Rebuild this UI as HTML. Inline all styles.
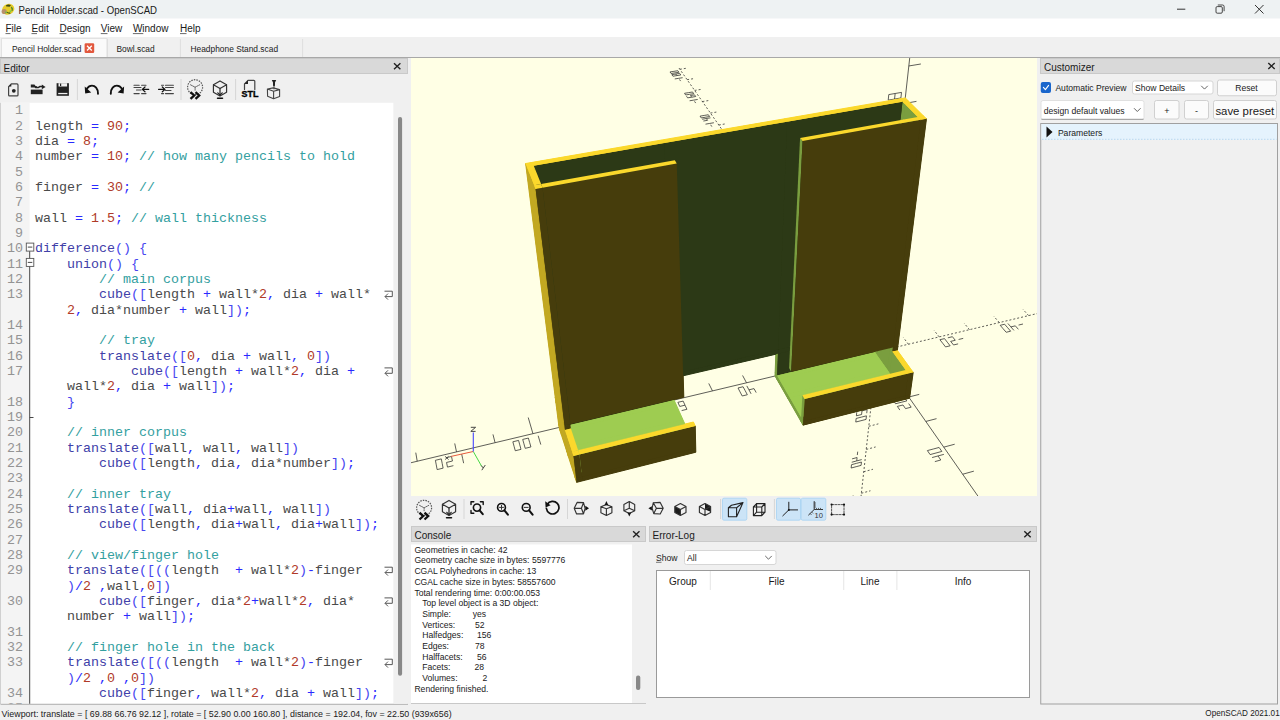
<!DOCTYPE html>
<html><head><meta charset="utf-8"><title>OpenSCAD</title>
<style>html,body{margin:0;padding:0;width:1280px;height:720px;overflow:hidden;background:#f0f0f0}
svg text{font-family:"Liberation Sans", sans-serif;} .mono{font-family:"Liberation Mono", monospace;}</style></head>
<body><svg width="1280" height="720" viewBox="0 0 1280 720" style="display:block">
<rect x="0" y="0" width="1280" height="720" fill="#f0f0f0"/>
<rect x="0" y="0" width="1280" height="18.5" fill="#eef2f3"/>
<text x="18.5" y="14.00" font-size="11" fill="#1a1a1a" textLength="138.5" lengthAdjust="spacingAndGlyphs">Pencil Holder.scad - OpenSCAD</text>
<rect x="0" y="18.5" width="1280" height="18.5" fill="#ffffff"/>
<text x="5.5" y="32.40" font-size="10" fill="#1a1a1a">File</text>
<text x="31.5" y="32.40" font-size="10" fill="#1a1a1a">Edit</text>
<text x="59.5" y="32.40" font-size="10" fill="#1a1a1a">Design</text>
<text x="100.8" y="32.40" font-size="10" fill="#1a1a1a">View</text>
<text x="132.9" y="32.40" font-size="10" fill="#1a1a1a">Window</text>
<text x="180" y="32.40" font-size="10" fill="#1a1a1a">Help</text>
<rect x="0" y="37" width="1280" height="20.5" fill="#f0f0f0"/>
<rect x="1.5" y="38.5" width="105.5" height="19.5" fill="#fafafa" stroke="#e2e2e2" stroke-width="1"/>
<line x1="107.4" y1="39" x2="107.4" y2="57" stroke="#dedede" stroke-width="1"/>
<line x1="180.4" y1="39" x2="180.4" y2="57" stroke="#dedede" stroke-width="1"/>
<line x1="302.6" y1="39" x2="302.6" y2="57" stroke="#dedede" stroke-width="1"/>
<line x1="107.4" y1="57.5" x2="1280" y2="57.5" stroke="#a8a8a8" stroke-width="1"/>
<text x="12" y="51.90" font-size="8.4" fill="#1a1a1a">Pencil Holder.scad</text>
<text x="116.5" y="51.90" font-size="8.4" fill="#1a1a1a">Bowl.scad</text>
<text x="190.5" y="51.90" font-size="8.4" fill="#1a1a1a">Headphone Stand.scad</text>
<line x1="0" y1="57.5" x2="1280" y2="57.5" stroke="#a8a8a8" stroke-width="1"/>
<rect x="0.5" y="58.5" width="407" height="15" fill="#d9d9d9" stroke="#c9c9c9" stroke-width="1"/>
<text x="3.5" y="71.80" font-size="10" fill="#1a1a1a">Editor</text>
<rect x="0" y="102.8" width="393.6" height="601" fill="#ffffff"/>
<rect x="0" y="102.8" width="29.6" height="601" fill="#f4f4f4"/>
<line x1="0.5" y1="102.8" x2="0.5" y2="704" stroke="#d0d0d0" stroke-width="1"/>
<line x1="0.5" y1="704.3" x2="408" y2="704.3" stroke="#b0b0b0" stroke-width="1"/>
<rect x="393.6" y="102.8" width="14" height="601" fill="#f0f0f0"/>
<rect x="398" y="117" width="4.1" height="558.7" fill="#888888" rx="2"/>
<rect x="411" y="58" width="626" height="438" fill="#ffffe5"/>
<svg x="411" y="58" width="626" height="438" viewBox="411 58 626 438" overflow="hidden">
<g stroke="#2a2a2a" stroke-width="0.75" fill="none"><line x1="877.09" y1="351.69" x2="156.17" y2="523.43"/>
<line x1="877.09" y1="351.69" x2="1399.90" y2="227.14" stroke-dasharray="2,2"/>
<line x1="877.09" y1="351.69" x2="1410.81" y2="1115.87"/>
<line x1="877.09" y1="351.69" x2="678.40" y2="67.20" stroke-dasharray="2,2"/>
<line x1="877.09" y1="351.69" x2="965.60" y2="-445.23"/>
<line x1="877.09" y1="351.69" x2="836.05" y2="721.29" stroke-dasharray="2,2"/>
<line x1="845.27" y1="359.27" x2="840.68" y2="352.30"/>
<line x1="892.54" y1="373.81" x2="902.82" y2="371.29"/>
<line x1="880.07" y1="324.88" x2="890.33" y2="322.51"/>
<line x1="908.39" y1="344.23" x2="903.41" y2="337.49" stroke-dasharray="2,2"/>
<line x1="862.36" y1="330.60" x2="872.24" y2="328.31" stroke-dasharray="2,2"/>
<line x1="874.23" y1="377.49" x2="884.12" y2="375.07" stroke-dasharray="2,2"/>
<line x1="812.91" y1="366.98" x2="808.53" y2="359.89"/>
<line x1="908.76" y1="397.03" x2="919.25" y2="394.39"/>
<line x1="883.17" y1="297.01" x2="893.62" y2="294.67"/>
<line x1="939.18" y1="336.90" x2="934.01" y2="330.26" stroke-dasharray="2,2"/>
<line x1="848.31" y1="310.47" x2="858.00" y2="308.29" stroke-dasharray="2,2"/>
<line x1="871.47" y1="402.35" x2="881.19" y2="399.91" stroke-dasharray="2,2"/>
<path d="M823.10,376.45L818.16,377.64M818.16,377.64L815.78,373.78M820.70,372.60L815.78,373.78M818.32,368.77L820.70,372.60M818.32,368.77L813.42,369.94M814.53,378.52L809.57,379.72M809.57,379.72L807.22,375.83M807.22,375.83L804.89,371.98M809.82,370.80L804.89,371.98M809.82,370.80L812.17,374.65M812.17,374.65L814.53,378.52"/>
<path d="M899.84,410.07L897.36,406.41M897.36,406.41L903.01,404.98M905.51,408.62L903.01,404.98M911.16,407.18L905.51,408.62M911.16,407.18L908.64,403.54M895.55,403.75L893.09,400.14M893.09,400.14L898.71,398.72M898.71,398.72L904.32,397.31M906.80,400.90L904.32,397.31M906.80,400.90L901.18,402.32M901.18,402.32L895.55,403.75"/>
<path d="M868.96,291.24L868.52,295.55M868.52,295.55L874.15,294.29M874.60,289.98L874.15,294.29M880.22,288.74L874.60,289.98M880.22,288.74L879.76,293.04M868.21,298.69L867.78,302.96M867.78,302.96L873.37,301.70M873.37,301.70L878.95,300.45M879.42,296.19L878.95,300.45M879.42,296.19L873.82,297.44M873.82,297.44L868.21,298.69"/>
<path d="M963.19,338.38L958.62,339.47M958.12,343.87L953.52,344.98M953.52,344.98L950.68,341.38M955.27,340.28L950.68,341.38M952.43,336.71L955.27,340.28M952.43,336.71L947.87,337.81M950.14,345.80L945.53,346.91M945.53,346.91L942.71,343.29M942.71,343.29L939.92,339.70M944.51,338.61L939.92,339.70M944.51,338.61L947.31,342.19M947.31,342.19L950.14,345.80"/>
<path d="M839.89,313.06L837.86,310.10M831.21,309.10L829.22,306.17M829.22,306.17L834.37,305.02M836.38,307.94L834.37,305.02M841.53,306.79L836.38,307.94M841.53,306.79L839.51,303.87M827.77,304.03L825.80,301.14M825.80,301.14L830.92,300.00M830.92,300.00L836.04,298.86M838.04,301.74L836.04,298.86M838.04,301.74L832.91,302.89M832.91,302.89L827.77,304.03"/>
<path d="M862.62,404.57L862.24,408.22M856.77,412.20L856.41,415.82M856.41,415.82L861.58,414.51M861.96,410.89L861.58,414.51M867.13,409.58L861.96,410.89M867.13,409.58L866.73,413.20M856.14,418.46L855.78,422.04M855.78,422.04L860.93,420.73M860.93,420.73L866.06,419.42M866.45,415.84L866.06,419.42M866.45,415.84L861.30,417.15M861.30,417.15L856.14,418.46"/>
<line x1="780.00" y1="374.82" x2="775.84" y2="367.61"/>
<line x1="925.81" y1="421.45" x2="936.52" y2="418.66"/>
<line x1="886.39" y1="268.01" x2="897.04" y2="265.70"/>
<line x1="969.48" y1="329.68" x2="964.12" y2="323.15" stroke-dasharray="2,2"/>
<line x1="834.87" y1="291.24" x2="844.38" y2="289.15" stroke-dasharray="2,2"/>
<line x1="868.81" y1="426.31" x2="878.36" y2="423.85" stroke-dasharray="2,2"/>
<line x1="746.52" y1="382.80" x2="742.59" y2="375.46"/>
<line x1="943.76" y1="447.15" x2="954.70" y2="444.22"/>
<line x1="889.74" y1="237.82" x2="900.61" y2="235.55"/>
<line x1="999.28" y1="322.58" x2="993.75" y2="316.16" stroke-dasharray="2,2"/>
<line x1="822.02" y1="272.84" x2="831.36" y2="270.84" stroke-dasharray="2,2"/>
<line x1="866.24" y1="449.42" x2="875.63" y2="446.95" stroke-dasharray="2,2"/>
<path d="M754.04,388.61L756.20,392.60M754.04,388.61L748.95,389.83M751.09,393.83L748.95,389.83M748.95,389.83L746.82,385.86M747.33,394.74L742.19,395.98M742.19,395.98L740.09,391.96M740.09,391.96L738.00,387.97M743.09,386.75L738.00,387.97M743.09,386.75L745.20,390.73M745.20,390.73L747.33,394.74"/>
<path d="M940.79,460.00L934.87,461.60M940.79,460.00L938.01,455.95M932.11,457.55L938.01,455.95M938.01,455.95L943.89,454.37M930.11,454.59L927.39,450.59M927.39,450.59L933.25,449.02M933.25,449.02L939.10,447.46M941.85,451.43L939.10,447.46M941.85,451.43L935.99,453.01M935.99,453.01L930.11,454.59"/>
<path d="M880.88,229.95L875.01,231.16M880.88,229.95L880.39,234.62M874.54,235.84L880.39,234.62M880.39,234.62L886.22,233.41M874.20,239.25L873.73,243.88M873.73,243.88L879.55,242.66M879.55,242.66L885.35,241.44M885.85,236.82L885.35,241.44M885.85,236.82L880.03,238.03M880.03,238.03L874.20,239.25"/>
<path d="M1022.99,324.01L1018.58,325.07M1015.33,325.85L1018.38,329.33M1015.33,325.85L1010.89,326.92M1013.92,330.40L1010.89,326.92M1010.89,326.92L1007.88,323.46M1010.65,331.19L1006.18,332.27M1006.18,332.27L1003.17,328.77M1003.17,328.77L1000.19,325.30M1004.63,324.24L1000.19,325.30M1004.63,324.24L1007.63,327.70M1007.63,327.70L1010.65,331.19"/>
<path d="M813.90,275.20L812.04,272.50M810.69,270.53L805.71,271.59M810.69,270.53L808.85,267.85M803.89,268.90L808.85,267.85M808.85,267.85L813.80,266.80M802.56,266.95L800.75,264.29M800.75,264.29L805.69,263.25M805.69,263.25L810.62,262.21M812.45,264.85L810.62,262.21M812.45,264.85L807.51,265.90M807.51,265.90L802.56,266.95"/>
<path d="M857.69,451.67L857.34,455.06M857.08,457.54L852.07,458.87M857.08,457.54L856.73,460.91M851.73,462.24L856.73,460.91M856.73,460.91L861.71,459.59M851.49,464.69L851.15,468.03M851.15,468.03L856.12,466.70M856.12,466.70L861.08,465.38M861.44,462.05L861.08,465.38M861.44,462.05L856.47,463.37M856.47,463.37L851.49,464.69"/>
<line x1="712.46" y1="390.91" x2="708.77" y2="383.45"/>
<line x1="962.68" y1="474.24" x2="973.86" y2="471.15"/>
<line x1="893.23" y1="206.35" x2="904.32" y2="204.12"/>
<line x1="1028.61" y1="315.59" x2="1022.91" y2="309.27" stroke-dasharray="2,2"/>
<line x1="809.72" y1="255.23" x2="818.88" y2="253.31" stroke-dasharray="2,2"/>
<line x1="863.76" y1="471.72" x2="872.99" y2="469.24" stroke-dasharray="2,2"/>
<line x1="677.81" y1="399.16" x2="674.36" y2="391.57"/>
<line x1="982.66" y1="502.83" x2="994.08" y2="499.57"/>
<line x1="896.88" y1="173.52" x2="908.19" y2="171.35"/>
<line x1="1057.48" y1="308.72" x2="1051.61" y2="302.49" stroke-dasharray="2,2"/>
<line x1="797.93" y1="238.35" x2="806.93" y2="236.51" stroke-dasharray="2,2"/>
<line x1="861.37" y1="493.26" x2="870.45" y2="490.77" stroke-dasharray="2,2"/>
<path d="M686.93,409.31L681.64,410.59M685.03,405.18L686.93,409.31M685.03,405.18L679.76,406.45M683.15,401.08L685.03,405.18M683.15,401.08L677.89,402.34M679.76,406.45L677.89,402.34M677.75,411.53L672.43,412.81M672.43,412.81L670.58,408.65M670.58,408.65L668.76,404.52M674.03,403.26L668.76,404.52M674.03,403.26L675.88,407.38M675.88,407.38L677.75,411.53"/>
<path d="M973.85,518.95L970.78,514.43M980.04,517.16L973.85,518.95M980.04,517.16L976.94,512.65M986.20,515.38L980.04,517.16M986.20,515.38L983.08,510.88M976.94,512.65L983.08,510.88M968.54,511.13L965.51,506.67M965.51,506.67L971.64,504.92M971.64,504.92L977.74,503.18M980.81,507.61L977.74,503.18M980.81,507.61L974.69,509.37M974.69,509.37L968.54,511.13"/>
<path d="M881.59,165.84L881.08,170.94M887.70,164.68L881.59,165.84M887.70,164.68L887.17,169.78M893.79,163.53L887.70,164.68M893.79,163.53L893.24,168.62M887.17,169.78L893.24,168.62M880.70,174.65L880.20,179.69M880.20,179.69L886.25,178.52M886.25,178.52L892.29,177.36M892.84,172.33L892.29,177.36M892.84,172.33L886.78,173.49M886.78,173.49L880.70,174.65"/>
<path d="M1080.91,310.10L1076.63,311.13M1076.71,315.25L1072.40,316.29M1073.49,311.89L1076.71,315.25M1073.49,311.89L1069.19,312.92M1070.29,308.54L1073.49,311.89M1070.29,308.54L1066.00,309.57M1069.19,312.92L1066.00,309.57M1069.23,317.06L1064.90,318.10M1064.90,318.10L1061.71,314.71M1061.71,314.71L1058.55,311.35M1062.85,310.32L1058.55,311.35M1062.85,310.32L1066.03,313.68M1066.03,313.68L1069.23,317.06"/>
<path d="M790.08,240.52L788.37,238.03M782.33,237.19L780.66,234.73M787.13,236.22L782.33,237.19M787.13,236.22L785.44,233.76M791.92,235.25L787.13,236.22M791.92,235.25L790.22,232.79M785.44,233.76L790.22,232.79M779.43,232.93L777.78,230.49M777.78,230.49L782.54,229.54M782.54,229.54L787.29,228.58M788.98,231.01L787.29,228.58M788.98,231.01L784.21,231.97M784.21,231.97L779.43,232.93"/>
<path d="M853.11,495.53L852.77,498.70M847.69,502.35L847.38,505.49M852.53,501.01L847.69,502.35M852.53,501.01L852.20,504.15M857.36,499.68L852.53,501.01M857.36,499.68L857.02,502.82M852.20,504.15L857.02,502.82M847.15,507.78L846.83,510.89M846.83,510.89L851.64,509.56M851.64,509.56L856.44,508.23M856.77,505.11L856.44,508.23M856.77,505.11L851.96,506.45M851.96,506.45L847.15,507.78"/>
<line x1="642.55" y1="407.56" x2="639.35" y2="399.84"/>
<line x1="1003.77" y1="533.06" x2="1015.45" y2="529.61"/>
<line x1="900.69" y1="139.25" x2="912.24" y2="137.13"/>
<line x1="1085.89" y1="301.95" x2="1079.87" y2="295.82" stroke-dasharray="2,2"/>
<line x1="786.62" y1="222.15" x2="795.47" y2="220.39" stroke-dasharray="2,2"/>
<line x1="859.06" y1="514.08" x2="867.99" y2="511.58" stroke-dasharray="2,2"/>
<line x1="606.66" y1="416.11" x2="603.73" y2="408.25"/>
<line x1="1026.13" y1="565.08" x2="1038.08" y2="561.41"/>
<line x1="904.66" y1="103.44" x2="916.46" y2="101.38"/>
<line x1="1113.86" y1="295.28" x2="1107.69" y2="289.25" stroke-dasharray="2,2"/>
<line x1="775.77" y1="206.61" x2="784.46" y2="204.92" stroke-dasharray="2,2"/>
<line x1="856.82" y1="534.21" x2="865.61" y2="531.70" stroke-dasharray="2,2"/>
<path d="M615.18,426.63L609.69,427.95M609.69,427.95L608.09,423.66M608.09,423.66L606.51,419.40M611.95,418.10L606.51,419.40M611.95,418.10L613.56,422.34M613.56,422.34L615.18,426.63M613.56,422.34L608.09,423.66M605.66,428.92L600.15,430.25M600.15,430.25L598.59,425.94M598.59,425.94L597.04,421.66M602.51,420.36L597.04,421.66M602.51,420.36L604.08,424.62M604.08,424.62L605.66,428.92"/>
<path d="M1017.50,583.16L1014.05,578.08M1014.05,578.08L1020.50,576.09M1020.50,576.09L1026.93,574.10M1030.43,579.15L1026.93,574.10M1030.43,579.15L1023.98,581.15M1023.98,581.15L1017.50,583.16M1023.98,581.15L1020.50,576.09M1011.53,574.38L1008.13,569.38M1008.13,569.38L1014.55,567.42M1014.55,567.42L1020.94,565.46M1024.38,570.43L1020.94,565.46M1024.38,570.43L1017.97,572.41M1017.97,572.41L1011.53,574.38"/>
<path d="M888.77,94.58L888.21,100.15M888.21,100.15L894.56,99.05M894.56,99.05L900.90,97.96M901.50,92.40L900.90,97.96M901.50,92.40L895.15,93.49M895.15,93.49L888.77,94.58M895.15,93.49L894.56,99.05M887.80,104.21L887.25,109.71M887.25,109.71L893.57,108.61M893.57,108.61L899.86,107.50M900.46,102.01L899.86,107.50M900.46,102.01L894.14,103.11M894.14,103.11L887.80,104.21"/>
<path d="M1137.02,296.63L1132.87,297.62M1133.21,301.62L1129.04,302.63M1129.04,302.63L1125.66,299.36M1125.66,299.36L1122.31,296.11M1126.46,295.12L1122.31,296.11M1126.46,295.12L1129.83,298.36M1129.83,298.36L1133.21,301.62M1129.83,298.36L1125.66,299.36M1125.97,303.37L1121.78,304.38M1121.78,304.38L1118.42,301.09M1118.42,301.09L1115.09,297.83M1119.26,296.84L1115.09,297.83M1119.26,296.84L1122.60,300.09M1122.60,300.09L1125.97,303.37"/>
<path d="M768.17,208.61L766.60,206.32M760.82,205.55L759.28,203.28M759.28,203.28L763.90,202.39M763.90,202.39L768.51,201.49M770.08,203.76L768.51,201.49M770.08,203.76L765.45,204.65M765.45,204.65L760.82,205.55M765.45,204.65L763.90,202.39M758.15,201.62L756.62,199.37M756.62,199.37L761.22,198.49M761.22,198.49L765.81,197.61M767.36,199.85L765.81,197.61M767.36,199.85L762.76,200.73M762.76,200.73L758.15,201.62"/>
<path d="M848.82,536.48L848.51,539.45M843.60,542.95L843.31,545.89M843.31,545.89L847.98,544.55M847.98,544.55L852.64,543.21M852.96,540.27L852.64,543.21M852.96,540.27L848.29,541.61M848.29,541.61L843.60,542.95M848.29,541.61L847.98,544.55M843.09,548.03L842.80,550.94M842.80,550.94L847.45,549.60M847.45,549.60L852.10,548.26M852.41,545.35L852.10,548.26M852.41,545.35L847.76,546.69M847.76,546.69L843.09,548.03"/>
<line x1="570.13" y1="424.82" x2="567.47" y2="416.81"/>
<line x1="1049.84" y1="599.03" x2="1062.07" y2="595.14"/>
<line x1="908.82" y1="65.97" x2="920.88" y2="63.99"/>
<line x1="1141.40" y1="288.72" x2="1135.08" y2="282.78" stroke-dasharray="2,2"/>
<line x1="765.34" y1="191.68" x2="773.88" y2="190.05" stroke-dasharray="2,2"/>
<line x1="854.66" y1="553.68" x2="863.31" y2="551.17" stroke-dasharray="2,2"/>
<line x1="532.94" y1="433.68" x2="528.22" y2="417.51"/>
<line x1="1075.03" y1="635.10" x2="1100.00" y2="626.87"/>
<line x1="913.18" y1="26.74" x2="937.75" y2="22.95"/>
<line x1="1168.52" y1="282.26" x2="1155.69" y2="270.64" stroke-dasharray="2,2"/>
<line x1="755.31" y1="177.32" x2="772.08" y2="174.19" stroke-dasharray="2,2"/>
<line x1="852.57" y1="572.53" x2="869.57" y2="567.52" stroke-dasharray="2,2"/>
<path d="M538.17,435.73L539.48,440.14M539.48,440.14L540.80,444.58M530.93,446.96L525.21,448.34M525.21,448.34L523.96,443.86M523.96,443.86L522.71,439.43M528.38,438.07L522.71,439.43M528.38,438.07L529.65,442.50M529.65,442.50L530.93,446.96M521.01,449.35L515.27,450.74M515.27,450.74L514.05,446.24M514.05,446.24L512.85,441.79M518.55,440.42L512.85,441.79M518.55,440.42L519.77,444.87M519.77,444.87L521.01,449.35"/>
<path d="M1087.21,661.02L1080.40,663.32M1080.40,663.32L1073.56,665.63M1066.70,655.54L1062.80,649.80M1062.80,649.80L1069.56,647.54M1069.56,647.54L1076.31,645.30M1080.26,651.00L1076.31,645.30M1080.26,651.00L1073.50,653.27M1073.50,653.27L1066.70,655.54M1059.95,645.62L1056.11,639.96M1056.11,639.96L1062.84,637.75M1062.84,637.75L1069.54,635.54M1073.43,641.15L1069.54,635.54M1073.43,641.15L1066.71,643.38M1066.71,643.38L1059.95,645.62"/>
<path d="M911.10,3.83L904.42,4.82M904.42,4.82L897.71,5.81M896.63,16.51L896.02,22.62M896.02,22.62L902.66,21.61M902.66,21.61L909.28,20.60M909.94,14.50L909.28,20.60M909.94,14.50L903.30,15.51M903.30,15.51L896.63,16.51M895.57,27.08L894.96,33.12M894.96,33.12L901.57,32.09M901.57,32.09L908.15,31.07M908.80,25.05L908.15,31.07M908.80,25.05L902.20,26.06M902.20,26.06L895.57,27.08"/>
<path d="M1198.36,281.90L1194.35,282.86M1187.87,280.44L1191.41,283.56M1191.41,283.56L1194.97,286.72M1187.98,288.40L1183.93,289.38M1183.93,289.38L1180.40,286.21M1180.40,286.21L1176.89,283.06M1180.92,282.10L1176.89,283.06M1180.92,282.10L1184.43,285.24M1184.43,285.24L1187.98,288.40M1180.95,290.10L1176.89,291.08M1176.89,291.08L1173.38,287.90M1173.38,287.90L1169.89,284.74M1173.93,283.77L1169.89,284.74M1173.93,283.77L1177.43,286.92M1177.43,286.92L1180.95,290.10"/>
<path d="M747.96,179.17L746.50,177.05M749.91,174.68L745.44,175.51M745.44,175.51L740.97,176.34M738.50,172.70L737.08,170.62M737.08,170.62L741.53,169.81M741.53,169.81L745.96,168.99M747.40,171.06L745.96,168.99M747.40,171.06L742.95,171.88M742.95,171.88L738.50,172.70M736.05,169.11L734.65,167.05M734.65,167.05L739.08,166.24M739.08,166.24L743.49,165.43M744.92,167.48L743.49,165.43M744.92,167.48L740.49,168.29M740.49,168.29L736.05,169.11"/>
<path d="M844.82,574.81L844.53,577.58M848.84,578.27L844.31,579.61M844.31,579.61L839.77,580.95M839.29,585.71L839.02,588.44M839.02,588.44L843.53,587.10M843.53,587.10L848.03,585.76M848.33,583.03L848.03,585.76M848.33,583.03L843.82,584.37M843.82,584.37L839.29,585.71M838.82,590.44L838.55,593.14M838.55,593.14L843.04,591.80M843.04,591.80L847.52,590.46M847.82,587.76L847.52,590.46M847.82,587.76L843.32,589.09M843.32,589.09L838.82,590.44"/>
<line x1="495.07" y1="442.70" x2="492.98" y2="434.40"/>
<line x1="1101.86" y1="673.50" x2="1114.69" y2="669.10"/>
<line x1="917.75" y1="-14.38" x2="930.35" y2="-16.19"/>
<line x1="1195.23" y1="275.90" x2="1188.63" y2="270.14" stroke-dasharray="2,2"/>
<line x1="745.66" y1="163.50" x2="753.92" y2="161.99" stroke-dasharray="2,2"/>
<line x1="850.54" y1="590.78" x2="858.93" y2="588.27" stroke-dasharray="2,2"/>
<line x1="456.50" y1="451.89" x2="454.72" y2="443.44"/>
<line x1="1130.47" y1="714.47" x2="1143.62" y2="709.77"/>
<line x1="922.54" y1="-57.54" x2="935.44" y2="-59.24"/>
<line x1="1221.53" y1="269.63" x2="1214.80" y2="263.96" stroke-dasharray="2,2"/>
<line x1="736.37" y1="150.20" x2="744.50" y2="148.74" stroke-dasharray="2,2"/>
<line x1="848.58" y1="608.47" x2="856.84" y2="605.96" stroke-dasharray="2,2"/>
<path d="M461.67,454.02L462.65,458.59M462.65,458.59L463.65,463.19M453.40,465.67L447.47,467.10M447.47,467.10L446.55,462.45M452.45,461.04L446.55,462.45M451.51,456.45L452.45,461.04M451.51,456.45L445.63,457.85M443.11,468.15L437.15,469.59M437.15,469.59L436.27,464.92M436.27,464.92L435.40,460.30M441.31,458.89L435.40,460.30M441.31,458.89L442.21,463.50M442.21,463.50L443.11,468.15"/>
<path d="M1144.76,744.00L1137.60,746.63M1137.60,746.63L1130.41,749.27M1122.58,737.76L1118.13,731.20M1118.13,731.20L1125.25,728.64M1129.73,735.16L1125.25,728.64M1136.84,732.58L1129.73,735.16M1136.84,732.58L1132.33,726.08M1114.89,726.44L1110.52,720.00M1110.52,720.00L1117.59,717.48M1117.59,717.48L1124.63,714.97M1129.06,721.36L1124.63,714.97M1129.06,721.36L1121.99,723.89M1121.99,723.89L1114.89,726.44"/>
<path d="M920.50,-82.94L913.50,-82.07M913.50,-82.07L906.48,-81.18M905.29,-69.38L904.61,-62.64M904.61,-62.64L911.57,-63.55M912.27,-70.28L911.57,-63.55M919.23,-71.17L912.27,-70.28M919.23,-71.17L918.50,-64.45M904.11,-57.73L903.44,-51.08M903.44,-51.08L910.36,-52.00M910.36,-52.00L917.25,-52.92M917.97,-59.55L917.25,-52.92M917.97,-59.55L911.05,-58.64M911.05,-58.64L904.11,-57.73"/>
<path d="M1250.89,269.28L1247.01,270.21M1240.48,267.86L1244.15,270.90M1244.15,270.90L1247.86,273.95M1241.07,275.59L1237.15,276.54M1237.15,276.54L1233.47,273.46M1237.39,272.52L1233.47,273.46M1233.73,269.48L1237.39,272.52M1233.73,269.48L1229.82,270.41M1234.26,277.23L1230.32,278.19M1230.32,278.19L1226.66,275.10M1226.66,275.10L1223.03,272.03M1226.96,271.10L1223.03,272.03M1226.96,271.10L1230.59,274.15M1230.59,274.15L1234.26,277.23"/>
<path d="M729.24,151.91L727.89,149.95M731.23,147.75L726.91,148.52M726.91,148.52L722.58,149.29M720.29,145.92L718.98,143.99M718.98,143.99L723.28,143.23M724.60,145.15L723.28,143.23M728.90,144.39L724.60,145.15M728.90,144.39L727.57,142.47M718.02,142.58L716.72,140.67M716.72,140.67L721.00,139.92M721.00,139.92L725.28,139.17M726.60,141.07L725.28,139.17M726.60,141.07L722.31,141.82M722.31,141.82L718.02,142.58"/>
<path d="M841.06,610.75L840.79,613.35M844.98,613.92L840.59,615.26M840.59,615.26L836.18,616.60M835.73,621.07L835.47,623.63M835.47,623.63L839.85,622.29M840.12,619.73L839.85,622.29M844.50,618.39L840.12,619.73M844.50,618.39L844.22,620.95M835.29,625.50L835.03,628.05M835.03,628.05L839.39,626.71M839.39,626.71L843.74,625.37M844.02,622.83L843.74,625.37M844.02,622.83L839.66,624.16M839.66,624.16L835.29,625.50"/>
<line x1="417.22" y1="461.25" x2="415.75" y2="452.64"/>
<line x1="1161.05" y1="758.26" x2="1174.54" y2="753.23"/>
<line x1="927.58" y1="-102.88" x2="940.78" y2="-104.47"/>
<line x1="1247.44" y1="263.46" x2="1240.58" y2="257.87" stroke-dasharray="2,2"/>
<line x1="727.41" y1="137.38" x2="735.41" y2="135.98" stroke-dasharray="2,2"/>
<line x1="846.67" y1="625.61" x2="854.81" y2="623.11" stroke-dasharray="2,2"/>
<line x1="377.20" y1="470.78" x2="376.06" y2="462.01"/>
<line x1="1193.82" y1="805.18" x2="1207.66" y2="799.79"/>
<line x1="932.87" y1="-150.59" x2="946.41" y2="-152.05"/>
<line x1="1272.97" y1="257.38" x2="1265.99" y2="251.87" stroke-dasharray="2,2"/>
<line x1="718.78" y1="125.01" x2="726.65" y2="123.66" stroke-dasharray="2,2"/>
<line x1="844.83" y1="642.24" x2="852.85" y2="639.74" stroke-dasharray="2,2"/>
<path d="M382.28,472.99L382.92,477.73M382.92,477.73L383.57,482.52M372.33,480.28L372.93,485.08M372.33,480.28L366.20,481.75M366.77,486.57L366.20,481.75M366.20,481.75L365.64,476.97M362.24,487.66L356.05,489.16M356.05,489.16L355.53,484.31M355.53,484.31L355.02,479.51M361.15,478.05L355.02,479.51M361.15,478.05L361.70,482.83M361.70,482.83L362.24,487.66"/>
<path d="M1210.75,839.14L1203.21,842.17M1203.21,842.17L1195.63,845.22M1194.14,828.97L1186.61,831.95M1194.14,828.97L1188.98,821.46M1181.49,824.41L1188.98,821.46M1188.98,821.46L1196.45,818.52M1177.77,818.94L1172.74,811.54M1172.74,811.54L1180.18,808.64M1180.18,808.64L1187.59,805.76M1192.68,813.09L1187.59,805.76M1192.68,813.09L1185.24,816.01M1185.24,816.01L1177.77,818.94"/>
<path d="M930.90,-178.90L923.55,-178.16M923.55,-178.16L916.17,-177.42M922.19,-165.10L914.85,-164.34M922.19,-165.10L921.41,-157.64M914.10,-156.87L921.41,-157.64M921.41,-157.64L928.68,-158.41M913.55,-151.43L912.81,-144.06M912.81,-144.06L920.07,-144.86M920.07,-144.86L927.30,-145.64M928.10,-152.99L927.30,-145.64M928.10,-152.99L920.84,-152.21M920.84,-152.21L913.55,-151.43"/>
<path d="M1301.87,257.04L1298.10,257.94M1291.52,255.66L1295.33,258.61M1295.33,258.61L1299.16,261.57M1288.76,260.18L1292.58,263.16M1288.76,260.18L1284.96,261.10M1288.77,264.08L1284.96,261.10M1284.96,261.10L1281.18,258.13M1285.97,264.76L1282.15,265.68M1282.15,265.68L1278.36,262.68M1278.36,262.68L1274.59,259.71M1278.40,258.80L1274.59,259.71M1278.40,258.80L1282.17,261.77M1282.17,261.77L1285.97,264.76"/>
<path d="M711.87,126.61L710.61,124.78M713.88,122.74L709.70,123.45M709.70,123.45L705.50,124.17M707.55,120.32L703.37,121.03M707.55,120.32L706.32,118.53M702.15,119.24L706.32,118.53M706.32,118.53L710.48,117.83M701.26,117.93L700.05,116.15M700.05,116.15L704.20,115.45M704.20,115.45L708.35,114.75M709.57,116.52L708.35,114.75M709.57,116.52L705.42,117.22M705.42,117.22L701.26,117.93"/>
<path d="M837.53,644.52L837.27,646.97M841.35,647.42L837.08,648.76M837.08,648.76L832.81,650.10M836.64,652.97L832.38,654.30M836.64,652.97L836.39,655.38M832.14,656.72L836.39,655.38M836.39,655.38L840.63,654.05M831.96,658.48L831.72,660.87M831.72,660.87L835.96,659.54M835.96,659.54L840.18,658.20M840.44,655.81L840.18,658.20M840.44,655.81L836.21,657.14M836.21,657.14L831.96,658.48"/>
<line x1="336.42" y1="480.50" x2="335.62" y2="471.56"/>
<line x1="1229.02" y1="855.58" x2="1243.23" y2="849.78"/>
<line x1="938.46" y1="-200.85" x2="952.33" y2="-202.16"/>
<line x1="1298.11" y1="251.39" x2="1291.02" y2="245.96" stroke-dasharray="2,2"/>
<line x1="710.45" y1="113.08" x2="718.20" y2="111.78" stroke-dasharray="2,2"/>
<line x1="843.03" y1="658.38" x2="850.94" y2="655.88" stroke-dasharray="2,2"/>
<line x1="294.85" y1="490.40" x2="294.41" y2="481.29"/>
<line x1="1266.93" y1="909.86" x2="1281.52" y2="903.61"/>
<line x1="944.34" y1="-253.87" x2="958.57" y2="-255.01"/>
<line x1="1322.89" y1="245.49" x2="1315.68" y2="240.14" stroke-dasharray="2,2"/>
<line x1="702.40" y1="101.57" x2="710.04" y2="100.31" stroke-dasharray="2,2"/>
<line x1="841.29" y1="674.04" x2="849.09" y2="671.55" stroke-dasharray="2,2"/>
<path d="M299.86,492.70L300.12,497.62M300.12,497.62L300.39,502.59M289.34,505.26L282.93,506.80M289.12,500.26L289.34,505.26M289.12,500.26L282.75,501.79M288.91,495.31L289.12,500.26M288.91,495.31L282.57,496.83M282.75,501.79L282.57,496.83M278.23,507.94L271.80,509.49M271.80,509.49L271.66,504.45M271.66,504.45L271.53,499.47M277.91,497.94L271.53,499.47M277.91,497.94L278.07,502.92M278.07,502.92L278.23,507.94"/>
<path d="M1287.17,949.33L1279.21,952.86M1279.21,952.86L1271.21,956.40M1260.71,940.96L1254.75,932.19M1268.65,937.49L1260.71,940.96M1268.65,937.49L1262.66,928.76M1276.56,934.03L1268.65,937.49M1276.56,934.03L1270.53,925.34M1262.66,928.76L1270.53,925.34M1250.42,925.83L1244.59,917.24M1244.59,917.24L1252.44,913.87M1252.44,913.87L1260.26,910.53M1266.16,919.04L1260.26,910.53M1266.16,919.04L1258.31,922.43M1258.31,922.43L1250.42,925.83"/>
<path d="M942.47,-285.58L934.73,-285.02M934.73,-285.02L926.95,-284.46M925.48,-269.87L924.65,-261.55M933.20,-270.46L925.48,-269.87M933.20,-270.46L932.33,-262.15M940.89,-271.04L933.20,-270.46M940.89,-271.04L939.99,-262.75M932.33,-262.15L939.99,-262.75M924.04,-255.50L923.21,-247.29M923.21,-247.29L930.85,-247.92M930.85,-247.92L938.45,-248.54M939.34,-256.71L938.45,-248.54M939.34,-256.71L931.70,-256.11M931.70,-256.11L924.04,-255.50"/>
<path d="M1351.35,245.15L1347.69,246.03M1341.07,243.82L1345.00,246.68M1345.00,246.68L1348.96,249.56M1342.57,251.10L1338.87,251.99M1338.63,248.21L1342.57,251.10M1338.63,248.21L1334.94,249.09M1334.72,245.34L1338.63,248.21M1334.72,245.34L1331.04,246.22M1334.94,249.09L1331.04,246.22M1336.15,252.65L1332.44,253.54M1332.44,253.54L1328.53,250.63M1328.53,250.63L1324.64,247.75M1328.33,246.86L1324.64,247.75M1328.33,246.86L1332.23,249.75M1332.23,249.75L1336.15,252.65"/>
<path d="M695.69,103.05L694.52,101.35M697.73,99.44L693.67,100.11M693.67,100.11L689.60,100.78M687.62,97.85L686.48,96.18M691.67,97.19L687.62,97.85M691.67,97.19L690.52,95.52M695.71,96.53L691.67,97.19M695.71,96.53L694.55,94.86M690.52,95.52L694.55,94.86M685.65,94.96L684.52,93.30M684.52,93.30L688.55,92.65M688.55,92.65L692.56,91.99M693.71,93.65L692.56,91.99M693.71,93.65L689.68,94.30M689.68,94.30L685.65,94.96"/>
<path d="M834.20,676.31L833.96,678.62M837.93,678.98L833.78,680.31M833.78,680.31L829.63,681.64M829.23,685.61L829.00,687.88M833.37,684.27L829.23,685.61M833.37,684.27L833.13,686.55M837.50,682.95L833.37,684.27M837.50,682.95L837.25,685.22M833.13,686.55L837.25,685.22M828.83,689.54L828.61,691.80M828.61,691.80L832.72,690.47M832.72,690.47L836.83,689.14M837.07,686.88L836.83,689.14M837.07,686.88L832.96,688.21M832.96,688.21L828.83,689.54"/>
<line x1="252.49" y1="500.49" x2="252.42" y2="491.21"/>
<line x1="1307.88" y1="968.49" x2="1322.86" y2="961.72"/>
<line x1="950.56" y1="-309.88" x2="965.17" y2="-310.84"/>
<line x1="1347.31" y1="239.67" x2="1339.99" y2="234.40" stroke-dasharray="2,2"/>
<line x1="694.63" y1="90.44" x2="702.15" y2="89.22" stroke-dasharray="2,2"/>
<line x1="839.60" y1="689.26" x2="847.29" y2="686.77" stroke-dasharray="2,2"/>
<line x1="209.30" y1="510.78" x2="209.61" y2="501.31"/>
<line x1="1352.24" y1="1032.00" x2="1367.64" y2="1024.66"/>
<line x1="957.15" y1="-369.14" x2="972.14" y2="-369.89"/>
<line x1="1371.38" y1="233.94" x2="1363.95" y2="228.74" stroke-dasharray="2,2"/>
<line x1="687.12" y1="79.68" x2="694.53" y2="78.51" stroke-dasharray="2,2"/>
<line x1="837.96" y1="704.04" x2="845.54" y2="701.55" stroke-dasharray="2,2"/>
<path d="M214.21,513.17L214.07,518.29M214.07,518.29L213.92,523.46M202.43,526.23L195.78,527.83M195.78,527.83L196.01,522.62M196.01,522.62L196.24,517.46M202.83,515.89L196.24,517.46M202.83,515.89L202.63,521.03M202.63,521.03L202.43,526.23M202.63,521.03L196.01,522.62M190.88,529.02L184.19,530.63M184.19,530.63L184.48,525.39M184.48,525.39L184.77,520.21M191.39,518.62L184.77,520.21M191.39,518.62L191.14,523.79M191.14,523.79L190.88,529.02"/>
<path d="M1376.70,1078.43L1368.29,1082.59M1368.29,1082.59L1359.82,1086.77M1347.45,1068.56L1340.43,1058.24M1340.43,1058.24L1348.80,1054.21M1348.80,1054.21L1357.12,1050.19M1364.20,1060.41L1357.12,1050.19M1364.20,1060.41L1355.85,1064.47M1355.85,1064.47L1347.45,1068.56M1355.85,1064.47L1348.80,1054.21M1335.34,1050.76L1328.48,1040.66M1328.48,1040.66L1336.78,1036.71M1336.78,1036.71L1345.05,1032.78M1351.98,1042.78L1345.05,1032.78M1351.98,1042.78L1343.68,1046.76M1343.68,1046.76L1335.34,1050.76"/>
<path d="M955.40,-404.89L947.23,-404.56M947.23,-404.56L939.02,-404.23M937.37,-387.86L936.43,-378.53M936.43,-378.53L944.54,-378.91M944.54,-378.91L952.62,-379.29M953.63,-388.59L952.62,-379.29M953.63,-388.59L945.52,-388.23M945.52,-388.23L937.37,-387.86M945.52,-388.23L944.54,-378.91M935.75,-371.74L934.82,-362.55M934.82,-362.55L942.88,-362.97M942.88,-362.97L950.90,-363.38M951.89,-372.53L950.90,-363.38M951.89,-372.53L943.83,-372.14M943.83,-372.14L935.75,-371.74"/>
<path d="M1399.41,233.61L1395.85,234.46M1389.20,232.32L1393.24,235.09M1393.24,235.09L1397.31,237.89M1391.10,239.39L1387.51,240.25M1387.51,240.25L1383.47,237.44M1383.47,237.44L1379.45,234.65M1383.02,233.79L1379.45,234.65M1383.02,233.79L1387.05,236.58M1387.05,236.58L1391.10,239.39M1387.05,236.58L1383.47,237.44M1384.87,240.89L1381.27,241.76M1381.27,241.76L1377.24,238.94M1377.24,238.94L1373.23,236.13M1376.82,235.27L1373.23,236.13M1376.82,235.27L1380.83,238.07M1380.83,238.07L1384.87,240.89"/>
<path d="M680.60,81.07L679.51,79.48M682.65,77.70L678.71,78.32M678.71,78.32L674.76,78.95M672.91,76.21L671.84,74.65M671.84,74.65L675.77,74.03M675.77,74.03L679.68,73.42M680.76,74.98L679.68,73.42M680.76,74.98L676.84,75.60M676.84,75.60L672.91,76.21M676.84,75.60L675.77,74.03M671.07,73.51L670.01,71.95M670.01,71.95L673.92,71.34M673.92,71.34L677.82,70.73M678.89,72.28L677.82,70.73M678.89,72.28L674.98,72.89M674.98,72.89L671.07,73.51"/>
<path d="M831.07,706.30L830.84,708.48M834.70,708.74L830.67,710.07M830.67,710.07L826.63,711.40M826.26,715.14L826.04,717.29M826.04,717.29L830.06,715.96M830.06,715.96L834.06,714.64M834.30,712.49L834.06,714.64M834.30,712.49L830.28,713.81M830.28,713.81L826.26,715.14M830.28,713.81L830.06,715.96M825.88,718.86L825.67,720.99M825.67,720.99L829.67,719.66M829.67,719.66L833.66,718.34M833.89,716.21L833.66,718.34M833.89,716.21L829.89,717.53M829.89,717.53L825.88,718.86"/>
<line x1="165.26" y1="521.27" x2="165.97" y2="511.62"/>
<line x1="1400.46" y1="1101.04" x2="1416.29" y2="1093.05"/>
<line x1="964.12" y1="-431.95" x2="979.54" y2="-432.46"/>
<line x1="1395.10" y1="228.29" x2="1387.57" y2="223.16" stroke-dasharray="2,2"/>
<line x1="679.85" y1="69.28" x2="687.15" y2="68.14" stroke-dasharray="2,2"/>
<line x1="836.37" y1="718.40" x2="843.85" y2="715.93" stroke-dasharray="2,2"/></g>
<path d="M905.27,97.93 L899.70,98.89 L902.49,101.67 L908.08,100.70Z" fill="#fbd82c" stroke="#fbd82c" stroke-width="1" stroke-linejoin="round"/>
<path d="M875.04,352.12 L877.32,355.39 L879.73,333.84 L877.40,330.59Z" fill="#7a9e3f" stroke="#7a9e3f" stroke-width="1" stroke-linejoin="round"/>
<path d="M877.40,330.59 L879.73,333.84 L880.19,329.72 L877.85,326.48Z" fill="#7a9e3f" stroke="#7a9e3f" stroke-width="1" stroke-linejoin="round"/>
<path d="M877.85,326.48 L880.19,329.72 L905.31,104.47 L902.49,101.67Z" fill="#7a9e3f" stroke="#7a9e3f" stroke-width="1" stroke-linejoin="round"/>
<path d="M908.08,100.70 L902.49,101.67 L905.31,104.47 L910.92,103.50Z" fill="#fbd82c" stroke="#fbd82c" stroke-width="1" stroke-linejoin="round"/>
<path d="M877.32,355.39 L887.40,369.87 L890.00,348.20 L879.73,333.84Z" fill="#7a9e3f" stroke="#7a9e3f" stroke-width="1" stroke-linejoin="round"/>
<path d="M879.73,333.84 L890.00,348.20 L890.50,344.06 L880.19,329.72Z" fill="#7a9e3f" stroke="#7a9e3f" stroke-width="1" stroke-linejoin="round"/>
<path d="M880.19,329.72 L890.50,344.06 L917.78,116.91 L905.31,104.47Z" fill="#7a9e3f" stroke="#7a9e3f" stroke-width="1" stroke-linejoin="round"/>
<path d="M910.92,103.50 L905.31,104.47 L917.78,116.91 L923.48,115.89Z" fill="#fbd82c" stroke="#fbd82c" stroke-width="1" stroke-linejoin="round"/>
<path d="M887.40,369.87 L889.77,373.28 L892.42,351.58 L890.00,348.20Z" fill="#7a9e3f" stroke="#7a9e3f" stroke-width="1" stroke-linejoin="round"/>
<path d="M890.00,348.20 L892.42,351.58 L892.93,347.44 L890.50,344.06Z" fill="#7a9e3f" stroke="#7a9e3f" stroke-width="1" stroke-linejoin="round"/>
<path d="M897.35,350.40 L892.42,351.58 L892.93,347.44 L897.87,346.26Z" fill="#463d0c" stroke="#463d0c" stroke-width="1" stroke-linejoin="round"/>
<path d="M897.87,346.26 L892.93,347.44 L920.73,119.85 L926.45,118.82Z" fill="#463d0c" stroke="#463d0c" stroke-width="1" stroke-linejoin="round"/>
<path d="M923.48,115.89 L917.78,116.91 L920.73,119.85 L926.45,118.82Z" fill="#fbd82c" stroke="#fbd82c" stroke-width="1" stroke-linejoin="round"/>
<path d="M889.77,373.28 L902.71,391.88 L905.63,370.04 L892.42,351.58Z" fill="#7a9e3f" stroke="#7a9e3f" stroke-width="1" stroke-linejoin="round"/>
<path d="M897.35,350.40 L892.42,351.58 L905.63,370.04 L910.64,368.82Z" fill="#fbd82c" stroke="#fbd82c" stroke-width="1" stroke-linejoin="round"/>
<path d="M909.59,398.22 L904.65,399.47 L905.20,395.45 L910.15,394.20Z" fill="#463d0c" stroke="#463d0c" stroke-width="1" stroke-linejoin="round"/>
<path d="M910.15,394.20 L905.20,395.45 L908.16,373.59 L913.20,372.35Z" fill="#463d0c" stroke="#463d0c" stroke-width="1" stroke-linejoin="round"/>
<path d="M910.64,368.82 L905.63,370.04 L908.16,373.59 L913.20,372.35Z" fill="#fbd82c" stroke="#fbd82c" stroke-width="1" stroke-linejoin="round"/>
<path d="M775.01,376.01 L776.97,379.44 L777.12,375.44 L775.16,372.02Z" fill="#7a9e3f" stroke="#7a9e3f" stroke-width="1" stroke-linejoin="round"/>
<path d="M775.16,372.02 L777.12,375.44 L777.97,353.73 L775.98,350.33Z" fill="#7a9e3f" stroke="#7a9e3f" stroke-width="1" stroke-linejoin="round"/>
<path d="M875.04,352.12 L777.12,375.44 L777.97,353.73 L877.40,330.59Z" fill="#2c3916" stroke="#2c3916" stroke-width="1" stroke-linejoin="round"/>
<path d="M877.40,330.59 L777.97,353.73 L778.14,349.58 L877.85,326.48Z" fill="#2c3916" stroke="#2c3916" stroke-width="1" stroke-linejoin="round"/>
<path d="M877.85,326.48 L778.14,349.58 L787.07,121.72 L902.49,101.67Z" fill="#2c3916" stroke="#2c3916" stroke-width="1" stroke-linejoin="round"/>
<path d="M899.70,98.89 L784.70,118.76 L787.07,121.72 L902.49,101.67Z" fill="#fbd82c" stroke="#fbd82c" stroke-width="1" stroke-linejoin="round"/>
<path d="M776.97,379.44 L778.94,382.89 L779.10,378.89 L777.12,375.44Z" fill="#7a9e3f" stroke="#7a9e3f" stroke-width="1" stroke-linejoin="round"/>
<path d="M875.04,352.12 L777.12,375.44 L779.10,378.89 L877.32,355.39Z" fill="#9ecc51" stroke="#9ecc51" stroke-width="1" stroke-linejoin="round"/>
<path d="M778.94,382.89 L787.64,398.15 L787.83,394.13 L779.10,378.89Z" fill="#7a9e3f" stroke="#7a9e3f" stroke-width="1" stroke-linejoin="round"/>
<path d="M877.32,355.39 L779.10,378.89 L787.83,394.13 L887.40,369.87Z" fill="#9ecc51" stroke="#9ecc51" stroke-width="1" stroke-linejoin="round"/>
<path d="M787.64,398.15 L789.69,401.74 L789.89,397.72 L787.83,394.13Z" fill="#7a9e3f" stroke="#7a9e3f" stroke-width="1" stroke-linejoin="round"/>
<path d="M887.40,369.87 L787.83,394.13 L789.89,397.72 L889.77,373.28Z" fill="#9ecc51" stroke="#9ecc51" stroke-width="1" stroke-linejoin="round"/>
<path d="M789.08,368.10 L791.18,371.66 L802.58,141.04 L800.07,137.91Z" fill="#7a9e3f" stroke="#7a9e3f" stroke-width="1" stroke-linejoin="round"/>
<path d="M892.93,347.44 L791.18,371.66 L802.58,141.04 L920.73,119.85Z" fill="#463d0c" stroke="#463d0c" stroke-width="1" stroke-linejoin="round"/>
<path d="M917.78,116.91 L800.07,137.91 L802.58,141.04 L920.73,119.85Z" fill="#fbd82c" stroke="#fbd82c" stroke-width="1" stroke-linejoin="round"/>
<path d="M789.69,401.74 L800.89,421.37 L801.13,417.32 L789.89,397.72Z" fill="#7a9e3f" stroke="#7a9e3f" stroke-width="1" stroke-linejoin="round"/>
<path d="M889.77,373.28 L789.89,397.72 L801.13,417.32 L902.71,391.88Z" fill="#9ecc51" stroke="#9ecc51" stroke-width="1" stroke-linejoin="round"/>
<path d="M800.89,421.37 L803.04,425.14 L803.28,421.09 L801.13,417.32Z" fill="#7a9e3f" stroke="#7a9e3f" stroke-width="1" stroke-linejoin="round"/>
<path d="M904.65,399.47 L803.04,425.14 L803.28,421.09 L905.20,395.45Z" fill="#463d0c" stroke="#463d0c" stroke-width="1" stroke-linejoin="round"/>
<path d="M801.13,417.32 L803.28,421.09 L804.62,399.06 L802.42,395.32Z" fill="#7a9e3f" stroke="#7a9e3f" stroke-width="1" stroke-linejoin="round"/>
<path d="M905.20,395.45 L803.28,421.09 L804.62,399.06 L908.16,373.59Z" fill="#463d0c" stroke="#463d0c" stroke-width="1" stroke-linejoin="round"/>
<path d="M905.63,370.04 L802.42,395.32 L804.62,399.06 L908.16,373.59Z" fill="#fbd82c" stroke="#fbd82c" stroke-width="1" stroke-linejoin="round"/>
<path d="M777.97,353.73 L673.21,378.11 L673.05,373.92 L778.14,349.58Z" fill="#2c3916" stroke="#2c3916" stroke-width="1" stroke-linejoin="round"/>
<path d="M778.14,349.58 L673.05,373.92 L664.38,143.02 L787.07,121.72Z" fill="#2c3916" stroke="#2c3916" stroke-width="1" stroke-linejoin="round"/>
<path d="M784.70,118.76 L662.49,139.88 L664.38,143.02 L787.07,121.72Z" fill="#fbd82c" stroke="#fbd82c" stroke-width="1" stroke-linejoin="round"/>
<path d="M674.03,400.00 L565.35,425.89 L562.67,403.83 L673.21,378.11Z" fill="#2c3916" stroke="#2c3916" stroke-width="1" stroke-linejoin="round"/>
<path d="M673.21,378.11 L562.67,403.83 L562.15,399.61 L673.05,373.92Z" fill="#2c3916" stroke="#2c3916" stroke-width="1" stroke-linejoin="round"/>
<path d="M673.05,373.92 L562.15,399.61 L533.70,165.72 L664.38,143.02Z" fill="#2c3916" stroke="#2c3916" stroke-width="1" stroke-linejoin="round"/>
<path d="M662.49,139.88 L532.36,162.37 L533.70,165.72 L664.38,143.02Z" fill="#fbd82c" stroke="#fbd82c" stroke-width="1" stroke-linejoin="round"/>
<path d="M674.03,400.00 L565.35,425.89 L566.61,429.72 L675.67,403.63Z" fill="#9ecc51" stroke="#9ecc51" stroke-width="1" stroke-linejoin="round"/>
<path d="M675.67,403.63 L566.61,429.72 L572.16,446.68 L682.90,419.70Z" fill="#9ecc51" stroke="#9ecc51" stroke-width="1" stroke-linejoin="round"/>
<path d="M682.90,419.70 L572.16,446.68 L573.47,450.68 L684.61,423.48Z" fill="#9ecc51" stroke="#9ecc51" stroke-width="1" stroke-linejoin="round"/>
<path d="M683.82,397.22 L570.36,424.24 L542.53,187.68 L676.77,163.60Z" fill="#463d0c" stroke="#463d0c" stroke-width="1" stroke-linejoin="round"/>
<path d="M674.77,160.27 L541.10,184.12 L542.53,187.68 L676.77,163.60Z" fill="#fbd82c" stroke="#fbd82c" stroke-width="1" stroke-linejoin="round"/>
<path d="M684.61,423.48 L573.47,450.68 L580.64,472.55 L693.93,444.17Z" fill="#9ecc51" stroke="#9ecc51" stroke-width="1" stroke-linejoin="round"/>
<path d="M695.81,452.23 L582.48,480.86 L582.02,476.76 L695.72,448.15Z" fill="#463d0c" stroke="#463d0c" stroke-width="1" stroke-linejoin="round"/>
<path d="M695.72,448.15 L582.02,476.76 L579.49,454.44 L695.23,425.97Z" fill="#463d0c" stroke="#463d0c" stroke-width="1" stroke-linejoin="round"/>
<path d="M693.41,422.01 L578.10,450.25 L579.49,454.44 L695.23,425.97Z" fill="#fbd82c" stroke="#fbd82c" stroke-width="1" stroke-linejoin="round"/>
<path d="M559.05,427.46 L560.27,431.28 L559.76,427.22 L558.53,423.41Z" fill="#c2a822" stroke="#c2a822" stroke-width="1" stroke-linejoin="round"/>
<path d="M558.53,423.41 L559.76,427.22 L556.98,405.15 L555.74,401.36Z" fill="#c2a822" stroke="#c2a822" stroke-width="1" stroke-linejoin="round"/>
<path d="M555.74,401.36 L556.98,405.15 L556.45,400.93 L555.21,397.15Z" fill="#c2a822" stroke="#c2a822" stroke-width="1" stroke-linejoin="round"/>
<path d="M555.21,397.15 L556.45,400.93 L526.95,166.89 L525.63,163.53Z" fill="#c2a822" stroke="#c2a822" stroke-width="1" stroke-linejoin="round"/>
<path d="M532.36,162.37 L525.63,163.53 L526.95,166.89 L533.70,165.72Z" fill="#fbd82c" stroke="#fbd82c" stroke-width="1" stroke-linejoin="round"/>
<path d="M560.27,431.28 L561.51,435.12 L561.00,431.06 L559.76,427.22Z" fill="#c2a822" stroke="#c2a822" stroke-width="1" stroke-linejoin="round"/>
<path d="M559.76,427.22 L561.00,431.06 L558.22,408.98 L556.98,405.15Z" fill="#c2a822" stroke="#c2a822" stroke-width="1" stroke-linejoin="round"/>
<path d="M556.98,405.15 L558.22,408.98 L557.69,404.75 L556.45,400.93Z" fill="#c2a822" stroke="#c2a822" stroke-width="1" stroke-linejoin="round"/>
<path d="M556.45,400.93 L557.69,404.75 L528.28,170.29 L526.95,166.89Z" fill="#c2a822" stroke="#c2a822" stroke-width="1" stroke-linejoin="round"/>
<path d="M533.70,165.72 L526.95,166.89 L528.28,170.29 L535.06,169.10Z" fill="#fbd82c" stroke="#fbd82c" stroke-width="1" stroke-linejoin="round"/>
<path d="M561.51,435.12 L566.97,452.15 L566.46,448.07 L561.00,431.06Z" fill="#c2a822" stroke="#c2a822" stroke-width="1" stroke-linejoin="round"/>
<path d="M561.00,431.06 L566.46,448.07 L563.74,425.89 L558.22,408.98Z" fill="#c2a822" stroke="#c2a822" stroke-width="1" stroke-linejoin="round"/>
<path d="M558.22,408.98 L563.74,425.89 L563.22,421.65 L557.69,404.75Z" fill="#c2a822" stroke="#c2a822" stroke-width="1" stroke-linejoin="round"/>
<path d="M557.69,404.75 L563.22,421.65 L534.19,185.36 L528.28,170.29Z" fill="#c2a822" stroke="#c2a822" stroke-width="1" stroke-linejoin="round"/>
<path d="M535.06,169.10 L528.28,170.29 L534.19,185.36 L541.10,184.12Z" fill="#fbd82c" stroke="#fbd82c" stroke-width="1" stroke-linejoin="round"/>
<path d="M566.97,452.15 L568.25,456.16 L567.75,452.08 L566.46,448.07Z" fill="#c2a822" stroke="#c2a822" stroke-width="1" stroke-linejoin="round"/>
<path d="M566.46,448.07 L567.75,452.08 L565.04,429.88 L563.74,425.89Z" fill="#c2a822" stroke="#c2a822" stroke-width="1" stroke-linejoin="round"/>
<path d="M563.74,425.89 L565.04,429.88 L564.52,425.63 L563.22,421.65Z" fill="#c2a822" stroke="#c2a822" stroke-width="1" stroke-linejoin="round"/>
<path d="M570.86,428.49 L565.04,429.88 L564.52,425.63 L570.36,424.24Z" fill="#463d0c" stroke="#463d0c" stroke-width="1" stroke-linejoin="round"/>
<path d="M563.22,421.65 L564.52,425.63 L535.58,188.92 L534.19,185.36Z" fill="#c2a822" stroke="#c2a822" stroke-width="1" stroke-linejoin="round"/>
<path d="M570.36,424.24 L564.52,425.63 L535.58,188.92 L542.53,187.68Z" fill="#463d0c" stroke="#463d0c" stroke-width="1" stroke-linejoin="round"/>
<path d="M541.10,184.12 L534.19,185.36 L535.58,188.92 L542.53,187.68Z" fill="#fbd82c" stroke="#fbd82c" stroke-width="1" stroke-linejoin="round"/>
<path d="M568.25,456.16 L575.29,478.11 L574.81,474.01 L567.75,452.08Z" fill="#c2a822" stroke="#c2a822" stroke-width="1" stroke-linejoin="round"/>
<path d="M567.75,452.08 L574.81,474.01 L572.16,451.71 L565.04,429.88Z" fill="#c2a822" stroke="#c2a822" stroke-width="1" stroke-linejoin="round"/>
<path d="M570.86,428.49 L565.04,429.88 L572.16,451.71 L578.10,450.25Z" fill="#fbd82c" stroke="#fbd82c" stroke-width="1" stroke-linejoin="round"/>
<path d="M575.29,478.11 L576.65,482.33 L576.16,478.23 L574.81,474.01Z" fill="#c2a822" stroke="#c2a822" stroke-width="1" stroke-linejoin="round"/>
<path d="M582.48,480.86 L576.65,482.33 L576.16,478.23 L582.02,476.76Z" fill="#463d0c" stroke="#463d0c" stroke-width="1" stroke-linejoin="round"/>
<path d="M574.81,474.01 L576.16,478.23 L573.53,455.91 L572.16,451.71Z" fill="#c2a822" stroke="#c2a822" stroke-width="1" stroke-linejoin="round"/>
<path d="M582.02,476.76 L576.16,478.23 L573.53,455.91 L579.49,454.44Z" fill="#463d0c" stroke="#463d0c" stroke-width="1" stroke-linejoin="round"/>
<path d="M578.10,450.25 L572.16,451.71 L573.53,455.91 L579.49,454.44Z" fill="#fbd82c" stroke="#fbd82c" stroke-width="1" stroke-linejoin="round"/>
<path d="M905.27,97.93 L899.70,98.89 L902.49,101.67 L908.08,100.70Z" fill="#fbd82c"/>
<path d="M875.04,352.12 L877.32,355.39 L879.73,333.84 L877.40,330.59Z" fill="#7a9e3f"/>
<path d="M877.40,330.59 L879.73,333.84 L880.19,329.72 L877.85,326.48Z" fill="#7a9e3f"/>
<path d="M877.85,326.48 L880.19,329.72 L905.31,104.47 L902.49,101.67Z" fill="#7a9e3f"/>
<path d="M908.08,100.70 L902.49,101.67 L905.31,104.47 L910.92,103.50Z" fill="#fbd82c"/>
<path d="M877.32,355.39 L887.40,369.87 L890.00,348.20 L879.73,333.84Z" fill="#7a9e3f"/>
<path d="M879.73,333.84 L890.00,348.20 L890.50,344.06 L880.19,329.72Z" fill="#7a9e3f"/>
<path d="M880.19,329.72 L890.50,344.06 L917.78,116.91 L905.31,104.47Z" fill="#7a9e3f"/>
<path d="M910.92,103.50 L905.31,104.47 L917.78,116.91 L923.48,115.89Z" fill="#fbd82c"/>
<path d="M887.40,369.87 L889.77,373.28 L892.42,351.58 L890.00,348.20Z" fill="#7a9e3f"/>
<path d="M890.00,348.20 L892.42,351.58 L892.93,347.44 L890.50,344.06Z" fill="#7a9e3f"/>
<path d="M897.35,350.40 L892.42,351.58 L892.93,347.44 L897.87,346.26Z" fill="#463d0c"/>
<path d="M897.87,346.26 L892.93,347.44 L920.73,119.85 L926.45,118.82Z" fill="#463d0c"/>
<path d="M923.48,115.89 L917.78,116.91 L920.73,119.85 L926.45,118.82Z" fill="#fbd82c"/>
<path d="M889.77,373.28 L902.71,391.88 L905.63,370.04 L892.42,351.58Z" fill="#7a9e3f"/>
<path d="M897.35,350.40 L892.42,351.58 L905.63,370.04 L910.64,368.82Z" fill="#fbd82c"/>
<path d="M909.59,398.22 L904.65,399.47 L905.20,395.45 L910.15,394.20Z" fill="#463d0c"/>
<path d="M910.15,394.20 L905.20,395.45 L908.16,373.59 L913.20,372.35Z" fill="#463d0c"/>
<path d="M910.64,368.82 L905.63,370.04 L908.16,373.59 L913.20,372.35Z" fill="#fbd82c"/>
<path d="M775.01,376.01 L776.97,379.44 L777.12,375.44 L775.16,372.02Z" fill="#7a9e3f"/>
<path d="M775.16,372.02 L777.12,375.44 L777.97,353.73 L775.98,350.33Z" fill="#7a9e3f"/>
<path d="M875.04,352.12 L777.12,375.44 L777.97,353.73 L877.40,330.59Z" fill="#2c3916"/>
<path d="M877.40,330.59 L777.97,353.73 L778.14,349.58 L877.85,326.48Z" fill="#2c3916"/>
<path d="M877.85,326.48 L778.14,349.58 L787.07,121.72 L902.49,101.67Z" fill="#2c3916"/>
<path d="M899.70,98.89 L784.70,118.76 L787.07,121.72 L902.49,101.67Z" fill="#fbd82c"/>
<path d="M776.97,379.44 L778.94,382.89 L779.10,378.89 L777.12,375.44Z" fill="#7a9e3f"/>
<path d="M875.04,352.12 L777.12,375.44 L779.10,378.89 L877.32,355.39Z" fill="#9ecc51"/>
<path d="M778.94,382.89 L787.64,398.15 L787.83,394.13 L779.10,378.89Z" fill="#7a9e3f"/>
<path d="M877.32,355.39 L779.10,378.89 L787.83,394.13 L887.40,369.87Z" fill="#9ecc51"/>
<path d="M787.64,398.15 L789.69,401.74 L789.89,397.72 L787.83,394.13Z" fill="#7a9e3f"/>
<path d="M887.40,369.87 L787.83,394.13 L789.89,397.72 L889.77,373.28Z" fill="#9ecc51"/>
<path d="M789.08,368.10 L791.18,371.66 L802.58,141.04 L800.07,137.91Z" fill="#7a9e3f"/>
<path d="M892.93,347.44 L791.18,371.66 L802.58,141.04 L920.73,119.85Z" fill="#463d0c"/>
<path d="M917.78,116.91 L800.07,137.91 L802.58,141.04 L920.73,119.85Z" fill="#fbd82c"/>
<path d="M789.69,401.74 L800.89,421.37 L801.13,417.32 L789.89,397.72Z" fill="#7a9e3f"/>
<path d="M889.77,373.28 L789.89,397.72 L801.13,417.32 L902.71,391.88Z" fill="#9ecc51"/>
<path d="M800.89,421.37 L803.04,425.14 L803.28,421.09 L801.13,417.32Z" fill="#7a9e3f"/>
<path d="M904.65,399.47 L803.04,425.14 L803.28,421.09 L905.20,395.45Z" fill="#463d0c"/>
<path d="M801.13,417.32 L803.28,421.09 L804.62,399.06 L802.42,395.32Z" fill="#7a9e3f"/>
<path d="M905.20,395.45 L803.28,421.09 L804.62,399.06 L908.16,373.59Z" fill="#463d0c"/>
<path d="M905.63,370.04 L802.42,395.32 L804.62,399.06 L908.16,373.59Z" fill="#fbd82c"/>
<path d="M777.97,353.73 L673.21,378.11 L673.05,373.92 L778.14,349.58Z" fill="#2c3916"/>
<path d="M778.14,349.58 L673.05,373.92 L664.38,143.02 L787.07,121.72Z" fill="#2c3916"/>
<path d="M784.70,118.76 L662.49,139.88 L664.38,143.02 L787.07,121.72Z" fill="#fbd82c"/>
<path d="M674.03,400.00 L565.35,425.89 L562.67,403.83 L673.21,378.11Z" fill="#2c3916"/>
<path d="M673.21,378.11 L562.67,403.83 L562.15,399.61 L673.05,373.92Z" fill="#2c3916"/>
<path d="M673.05,373.92 L562.15,399.61 L533.70,165.72 L664.38,143.02Z" fill="#2c3916"/>
<path d="M662.49,139.88 L532.36,162.37 L533.70,165.72 L664.38,143.02Z" fill="#fbd82c"/>
<path d="M674.03,400.00 L565.35,425.89 L566.61,429.72 L675.67,403.63Z" fill="#9ecc51"/>
<path d="M675.67,403.63 L566.61,429.72 L572.16,446.68 L682.90,419.70Z" fill="#9ecc51"/>
<path d="M682.90,419.70 L572.16,446.68 L573.47,450.68 L684.61,423.48Z" fill="#9ecc51"/>
<path d="M683.82,397.22 L570.36,424.24 L542.53,187.68 L676.77,163.60Z" fill="#463d0c"/>
<path d="M674.77,160.27 L541.10,184.12 L542.53,187.68 L676.77,163.60Z" fill="#fbd82c"/>
<path d="M684.61,423.48 L573.47,450.68 L580.64,472.55 L693.93,444.17Z" fill="#9ecc51"/>
<path d="M695.81,452.23 L582.48,480.86 L582.02,476.76 L695.72,448.15Z" fill="#463d0c"/>
<path d="M695.72,448.15 L582.02,476.76 L579.49,454.44 L695.23,425.97Z" fill="#463d0c"/>
<path d="M693.41,422.01 L578.10,450.25 L579.49,454.44 L695.23,425.97Z" fill="#fbd82c"/>
<path d="M559.05,427.46 L560.27,431.28 L559.76,427.22 L558.53,423.41Z" fill="#c2a822"/>
<path d="M558.53,423.41 L559.76,427.22 L556.98,405.15 L555.74,401.36Z" fill="#c2a822"/>
<path d="M555.74,401.36 L556.98,405.15 L556.45,400.93 L555.21,397.15Z" fill="#c2a822"/>
<path d="M555.21,397.15 L556.45,400.93 L526.95,166.89 L525.63,163.53Z" fill="#c2a822"/>
<path d="M532.36,162.37 L525.63,163.53 L526.95,166.89 L533.70,165.72Z" fill="#fbd82c"/>
<path d="M560.27,431.28 L561.51,435.12 L561.00,431.06 L559.76,427.22Z" fill="#c2a822"/>
<path d="M559.76,427.22 L561.00,431.06 L558.22,408.98 L556.98,405.15Z" fill="#c2a822"/>
<path d="M556.98,405.15 L558.22,408.98 L557.69,404.75 L556.45,400.93Z" fill="#c2a822"/>
<path d="M556.45,400.93 L557.69,404.75 L528.28,170.29 L526.95,166.89Z" fill="#c2a822"/>
<path d="M533.70,165.72 L526.95,166.89 L528.28,170.29 L535.06,169.10Z" fill="#fbd82c"/>
<path d="M561.51,435.12 L566.97,452.15 L566.46,448.07 L561.00,431.06Z" fill="#c2a822"/>
<path d="M561.00,431.06 L566.46,448.07 L563.74,425.89 L558.22,408.98Z" fill="#c2a822"/>
<path d="M558.22,408.98 L563.74,425.89 L563.22,421.65 L557.69,404.75Z" fill="#c2a822"/>
<path d="M557.69,404.75 L563.22,421.65 L534.19,185.36 L528.28,170.29Z" fill="#c2a822"/>
<path d="M535.06,169.10 L528.28,170.29 L534.19,185.36 L541.10,184.12Z" fill="#fbd82c"/>
<path d="M566.97,452.15 L568.25,456.16 L567.75,452.08 L566.46,448.07Z" fill="#c2a822"/>
<path d="M566.46,448.07 L567.75,452.08 L565.04,429.88 L563.74,425.89Z" fill="#c2a822"/>
<path d="M563.74,425.89 L565.04,429.88 L564.52,425.63 L563.22,421.65Z" fill="#c2a822"/>
<path d="M570.86,428.49 L565.04,429.88 L564.52,425.63 L570.36,424.24Z" fill="#463d0c"/>
<path d="M563.22,421.65 L564.52,425.63 L535.58,188.92 L534.19,185.36Z" fill="#c2a822"/>
<path d="M570.36,424.24 L564.52,425.63 L535.58,188.92 L542.53,187.68Z" fill="#463d0c"/>
<path d="M541.10,184.12 L534.19,185.36 L535.58,188.92 L542.53,187.68Z" fill="#fbd82c"/>
<path d="M568.25,456.16 L575.29,478.11 L574.81,474.01 L567.75,452.08Z" fill="#c2a822"/>
<path d="M567.75,452.08 L574.81,474.01 L572.16,451.71 L565.04,429.88Z" fill="#c2a822"/>
<path d="M570.86,428.49 L565.04,429.88 L572.16,451.71 L578.10,450.25Z" fill="#fbd82c"/>
<path d="M575.29,478.11 L576.65,482.33 L576.16,478.23 L574.81,474.01Z" fill="#c2a822"/>
<path d="M582.48,480.86 L576.65,482.33 L576.16,478.23 L582.02,476.76Z" fill="#463d0c"/>
<path d="M574.81,474.01 L576.16,478.23 L573.53,455.91 L572.16,451.71Z" fill="#c2a822"/>
<path d="M582.02,476.76 L576.16,478.23 L573.53,455.91 L579.49,454.44Z" fill="#463d0c"/>
<path d="M578.10,450.25 L572.16,451.71 L573.53,455.91 L579.49,454.44Z" fill="#fbd82c"/>
<line x1="473.3" y1="451.5" x2="451.1" y2="456.4" stroke="#e85a3c" stroke-width="1"/>
<line x1="473.3" y1="451.5" x2="481.7" y2="466.4" stroke="#46d846" stroke-width="1"/>
<line x1="473.3" y1="451.5" x2="473.3" y2="432.4" stroke="#4646ff" stroke-width="1.1"/>
<path d="M470.8,427.3 H475.6 L470.8,431.4 H475.6" fill="none" stroke="#333" stroke-width="0.9"/>
<path d="M481.3,465.6 L483.3,468 M485.3,465 L481.8,470.2" fill="none" stroke="#333" stroke-width="0.9"/>
<path d="M445.2,456.3 L448.6,459.6 M448.6,456.3 L445.2,459.6" fill="none" stroke="#333" stroke-width="0.8"/>
</svg>
<rect x="411.5" y="526.5" width="234" height="15" fill="#d9d9d9" stroke="#c9c9c9" stroke-width="1"/>
<text x="414.5" y="539.00" font-size="10" fill="#1a1a1a">Console</text>
<rect x="411" y="544.5" width="221" height="159" fill="#ffffff"/>
<line x1="411" y1="703.5" x2="646" y2="703.5" stroke="#c8c8c8" stroke-width="1"/>
<rect x="636" y="675.5" width="4.3" height="14.5" fill="#888888" rx="2"/>
<text x="414.4" y="552.80" font-size="8.6" fill="#1a1a1a">Geometries in cache: 42</text>
<text x="414.4" y="563.48" font-size="8.6" fill="#1a1a1a">Geometry cache size in bytes: 5597776</text>
<text x="414.4" y="574.16" font-size="8.6" fill="#1a1a1a">CGAL Polyhedrons in cache: 13</text>
<text x="414.4" y="584.84" font-size="8.6" fill="#1a1a1a">CGAL cache size in bytes: 58557600</text>
<text x="414.4" y="595.52" font-size="8.6" fill="#1a1a1a">Total rendering time: 0:00:00.053</text>
<text x="422.2" y="606.20" font-size="8.6" fill="#1a1a1a">Top level object is a 3D object:</text>
<text x="422.2" y="616.88" font-size="8.6" fill="#1a1a1a">Simple:</text>
<text x="472.8" y="616.88" font-size="8.6" fill="#1a1a1a">yes</text>
<text x="422.2" y="627.56" font-size="8.6" fill="#1a1a1a">Vertices:</text>
<text x="475" y="627.56" font-size="8.6" fill="#1a1a1a">52</text>
<text x="422.2" y="638.24" font-size="8.6" fill="#1a1a1a">Halfedges:</text>
<text x="477" y="638.24" font-size="8.6" fill="#1a1a1a">156</text>
<text x="422.2" y="648.92" font-size="8.6" fill="#1a1a1a">Edges:</text>
<text x="475" y="648.92" font-size="8.6" fill="#1a1a1a">78</text>
<text x="422.2" y="659.60" font-size="8.6" fill="#1a1a1a">Halffacets:</text>
<text x="477" y="659.60" font-size="8.6" fill="#1a1a1a">56</text>
<text x="422.2" y="670.28" font-size="8.6" fill="#1a1a1a">Facets:</text>
<text x="474.4" y="670.28" font-size="8.6" fill="#1a1a1a">28</text>
<text x="422.2" y="680.96" font-size="8.6" fill="#1a1a1a">Volumes:</text>
<text x="482.5" y="680.96" font-size="8.6" fill="#1a1a1a">2</text>
<text x="414.4" y="691.64" font-size="8.6" fill="#1a1a1a">Rendering finished.</text>
<rect x="649.5" y="526.5" width="387" height="15" fill="#d9d9d9" stroke="#c9c9c9" stroke-width="1"/>
<text x="652.5" y="539.00" font-size="10" fill="#1a1a1a">Error-Log</text>
<text x="656" y="561.10" font-size="8.6" fill="#1a1a1a">Show</text>
<line x1="656" y1="562.3" x2="661.5" y2="562.3" stroke="#555" stroke-width="0.8"/>
<rect x="684.5" y="550.5" width="91.5" height="14" fill="#ffffff" stroke="#d6d6d6" stroke-width="1" rx="2"/>
<text x="687" y="561.10" font-size="8.6" fill="#1a1a1a">All</text>
<rect x="656.5" y="570.5" width="373" height="127" fill="#ffffff" stroke="#9a9a9a" stroke-width="1"/>
<text x="683" y="585.10" font-size="10" fill="#1a1a1a" text-anchor="middle">Group</text>
<text x="776.5" y="585.10" font-size="10" fill="#1a1a1a" text-anchor="middle">File</text>
<text x="870" y="585.10" font-size="10" fill="#1a1a1a" text-anchor="middle">Line</text>
<text x="963" y="585.10" font-size="10" fill="#1a1a1a" text-anchor="middle">Info</text>
<line x1="710.3" y1="571" x2="710.3" y2="590" stroke="#e5e5e5" stroke-width="1"/>
<line x1="843.75" y1="571" x2="843.75" y2="590" stroke="#e5e5e5" stroke-width="1"/>
<line x1="896.9" y1="571" x2="896.9" y2="590" stroke="#e5e5e5" stroke-width="1"/>
<rect x="1040.5" y="58.5" width="239" height="15" fill="#d9d9d9" stroke="#c9c9c9" stroke-width="1"/>
<text x="1044" y="71.40" font-size="10" fill="#1a1a1a">Customizer</text>
<rect x="1040.75" y="82" width="10.25" height="10.9" fill="#1a66cc" rx="2"/>
<text x="1055.4" y="91.00" font-size="8.6" fill="#1a1a1a">Automatic Preview</text>
<rect x="1132.5" y="81" width="80.5" height="13" fill="#ffffff" stroke="#d6d6d6" stroke-width="1" rx="2"/>
<text x="1135" y="91.00" font-size="8.6" fill="#1a1a1a">Show Details</text>
<rect x="1217.5" y="80" width="59" height="15.75" fill="#fbfbfb" stroke="#d0d0d0" stroke-width="1" rx="2"/>
<text x="1246.5" y="91.20" font-size="8.6" fill="#1a1a1a" text-anchor="middle">Reset</text>
<rect x="1041" y="100.5" width="103" height="19" fill="#ffffff" stroke="#e0e0e0" stroke-width="1" rx="2"/>
<line x1="1041.5" y1="119.3" x2="1143.5" y2="119.3" stroke="#9a9a9a" stroke-width="1"/>
<text x="1043.75" y="113.90" font-size="8.6" fill="#1a1a1a">design default values</text>
<rect x="1154.5" y="100.5" width="24.5" height="18.5" fill="#fbfbfb" stroke="#d0d0d0" stroke-width="1" rx="2"/>
<text x="1166.8" y="113.90" font-size="9" fill="#1a1a1a" text-anchor="middle">+</text>
<rect x="1184.5" y="100.5" width="24" height="18.5" fill="#fbfbfb" stroke="#d0d0d0" stroke-width="1" rx="2"/>
<text x="1196.5" y="113.90" font-size="9" fill="#1a1a1a" text-anchor="middle">-</text>
<rect x="1213.5" y="100.5" width="63" height="18.5" fill="#fbfbfb" stroke="#d0d0d0" stroke-width="1" rx="2"/>
<text x="1215.4" y="115.10" font-size="11.4" fill="#1a1a1a">save preset</text>
<rect x="1040.75" y="123.5" width="236.75" height="580.5" fill="#f0f0f0" stroke="#a0a0a0" stroke-width="1"/>
<rect x="1041.5" y="124" width="235.5" height="15.75" fill="#e5f3fd"/>
<line x1="1042" y1="139.3" x2="1276.5" y2="139.3" stroke="#b8d8f0" stroke-width="1" stroke-dasharray="1.5,1.5"/>
<text x="1057.9" y="135.80" font-size="8.6" fill="#1a1a1a">Parameters</text>
<path d="M1046.5,126.5 L1052.5,132 L1046.5,137.5Z" fill="#111"/>
<text x="1.6" y="716.90" font-size="9.2" fill="#1a1a1a" textLength="450" lengthAdjust="spacingAndGlyphs">Viewport: translate = [ 69.88 66.76 92.12 ], rotate = [ 52.90 0.00 160.80 ], distance = 192.04, fov = 22.50 (939x656)</text>
<text x="1205.3" y="716.40" font-size="9.6" fill="#1a1a1a" textLength="74.4" lengthAdjust="spacingAndGlyphs">OpenSCAD 2021.01</text>
<defs><clipPath id="codeclip"><rect x="0" y="102.8" width="393.6" height="601"/></clipPath></defs>
<g clip-path="url(#codeclip)">
<text class="mono" x="23" y="114.40" font-size="13.33" fill="#939393" text-anchor="end">1</text>
<text class="mono" x="23" y="129.73" font-size="13.33" fill="#939393" text-anchor="end">2</text>
<text class="mono" y="129.73" font-size="13.33" xml:space="preserve"><tspan x="35.0" fill="#4a4a4a">length</tspan><tspan x="91.0" fill="#2a2aff">=</tspan><tspan x="107.0" fill="#b03a28">90</tspan><tspan x="123.0" fill="#2a2aff">;</tspan></text>
<text class="mono" x="23" y="145.07" font-size="13.33" fill="#939393" text-anchor="end">3</text>
<text class="mono" y="145.07" font-size="13.33" xml:space="preserve"><tspan x="35.0" fill="#4a4a4a">dia</tspan><tspan x="67.0" fill="#2a2aff">=</tspan><tspan x="83.0" fill="#b03a28">8</tspan><tspan x="91.0" fill="#2a2aff">;</tspan></text>
<text class="mono" x="23" y="160.40" font-size="13.33" fill="#939393" text-anchor="end">4</text>
<text class="mono" y="160.40" font-size="13.33" xml:space="preserve"><tspan x="35.0" fill="#4a4a4a">number</tspan><tspan x="91.0" fill="#2a2aff">=</tspan><tspan x="107.0" fill="#b03a28">10</tspan><tspan x="123.0" fill="#2a2aff">;</tspan><tspan x="139.0" fill="#33a0a0">// how many pencils to hold</tspan></text>
<text class="mono" x="23" y="175.73" font-size="13.33" fill="#939393" text-anchor="end">5</text>
<text class="mono" x="23" y="191.06" font-size="13.33" fill="#939393" text-anchor="end">6</text>
<text class="mono" y="191.06" font-size="13.33" xml:space="preserve"><tspan x="35.0" fill="#4a4a4a">finger</tspan><tspan x="91.0" fill="#2a2aff">=</tspan><tspan x="107.0" fill="#b03a28">30</tspan><tspan x="123.0" fill="#2a2aff">;</tspan><tspan x="139.0" fill="#33a0a0">//</tspan></text>
<text class="mono" x="23" y="206.40" font-size="13.33" fill="#939393" text-anchor="end">7</text>
<text class="mono" x="23" y="221.73" font-size="13.33" fill="#939393" text-anchor="end">8</text>
<text class="mono" y="221.73" font-size="13.33" xml:space="preserve"><tspan x="35.0" fill="#4a4a4a">wall</tspan><tspan x="75.0" fill="#2a2aff">=</tspan><tspan x="91.0" fill="#b03a28">1.5</tspan><tspan x="115.0" fill="#2a2aff">;</tspan><tspan x="131.0" fill="#33a0a0">// wall thickness</tspan></text>
<text class="mono" x="23" y="237.06" font-size="13.33" fill="#939393" text-anchor="end">9</text>
<text class="mono" x="23" y="252.40" font-size="13.33" fill="#939393" text-anchor="end">10</text>
<text class="mono" y="252.40" font-size="13.33" xml:space="preserve"><tspan x="35.0" fill="#4040a8">difference</tspan><tspan x="115.0" fill="#4646f0">(</tspan><tspan x="123.0" fill="#4646f0">)</tspan><tspan x="139.0" fill="#4646f0">{</tspan></text>
<text class="mono" x="23" y="267.73" font-size="13.33" fill="#939393" text-anchor="end">11</text>
<text class="mono" y="267.73" font-size="13.33" xml:space="preserve"><tspan x="67.0" fill="#4040a8">union</tspan><tspan x="107.0" fill="#4646f0">(</tspan><tspan x="115.0" fill="#4646f0">)</tspan><tspan x="131.0" fill="#4646f0">{</tspan></text>
<text class="mono" x="23" y="283.06" font-size="13.33" fill="#939393" text-anchor="end">12</text>
<text class="mono" y="283.06" font-size="13.33" xml:space="preserve"><tspan x="99.0" fill="#33a0a0">// main corpus</tspan></text>
<text class="mono" x="23" y="298.40" font-size="13.33" fill="#939393" text-anchor="end">13</text>
<text class="mono" y="298.40" font-size="13.33" xml:space="preserve"><tspan x="99.0" fill="#4040a8">cube</tspan><tspan x="131.0" fill="#4646f0">(</tspan><tspan x="139.0" fill="#4646f0">[</tspan><tspan x="147.0" fill="#4a4a4a">length</tspan><tspan x="203.0" fill="#2a2aff">+</tspan><tspan x="219.0" fill="#4a4a4a">wall</tspan><tspan x="251.0" fill="#4a4a4a">*</tspan><tspan x="259.0" fill="#b03a28">2</tspan><tspan x="267.0" fill="#2a2aff">,</tspan><tspan x="283.0" fill="#4a4a4a">dia</tspan><tspan x="315.0" fill="#2a2aff">+</tspan><tspan x="331.0" fill="#4a4a4a">wall</tspan><tspan x="363.0" fill="#4a4a4a">*</tspan></text>
<path d="M384.5,291.2 H392.3 V296.6 H385.2 M388,293.6 L385,296.6 L388,299.6" fill="none" stroke="#444" stroke-width="0.9"/>
<text class="mono" y="313.73" font-size="13.33" xml:space="preserve"><tspan x="67.0" fill="#b03a28">2</tspan><tspan x="75.0" fill="#2a2aff">,</tspan><tspan x="91.0" fill="#4a4a4a">dia</tspan><tspan x="115.0" fill="#4a4a4a">*</tspan><tspan x="123.0" fill="#4a4a4a">number</tspan><tspan x="179.0" fill="#2a2aff">+</tspan><tspan x="195.0" fill="#4a4a4a">wall</tspan><tspan x="227.0" fill="#4646f0">]</tspan><tspan x="235.0" fill="#4646f0">)</tspan><tspan x="243.0" fill="#2a2aff">;</tspan></text>
<text class="mono" x="23" y="329.06" font-size="13.33" fill="#939393" text-anchor="end">14</text>
<text class="mono" x="23" y="344.39" font-size="13.33" fill="#939393" text-anchor="end">15</text>
<text class="mono" y="344.39" font-size="13.33" xml:space="preserve"><tspan x="99.0" fill="#33a0a0">// tray</tspan></text>
<text class="mono" x="23" y="359.73" font-size="13.33" fill="#939393" text-anchor="end">16</text>
<text class="mono" y="359.73" font-size="13.33" xml:space="preserve"><tspan x="99.0" fill="#4040a8">translate</tspan><tspan x="171.0" fill="#4646f0">(</tspan><tspan x="179.0" fill="#4646f0">[</tspan><tspan x="187.0" fill="#b03a28">0</tspan><tspan x="195.0" fill="#2a2aff">,</tspan><tspan x="211.0" fill="#4a4a4a">dia</tspan><tspan x="243.0" fill="#2a2aff">+</tspan><tspan x="259.0" fill="#4a4a4a">wall</tspan><tspan x="291.0" fill="#2a2aff">,</tspan><tspan x="307.0" fill="#b03a28">0</tspan><tspan x="315.0" fill="#4646f0">]</tspan><tspan x="323.0" fill="#4646f0">)</tspan></text>
<text class="mono" x="23" y="375.06" font-size="13.33" fill="#939393" text-anchor="end">17</text>
<text class="mono" y="375.06" font-size="13.33" xml:space="preserve"><tspan x="131.0" fill="#4040a8">cube</tspan><tspan x="163.0" fill="#4646f0">(</tspan><tspan x="171.0" fill="#4646f0">[</tspan><tspan x="179.0" fill="#4a4a4a">length</tspan><tspan x="235.0" fill="#2a2aff">+</tspan><tspan x="251.0" fill="#4a4a4a">wall</tspan><tspan x="283.0" fill="#4a4a4a">*</tspan><tspan x="291.0" fill="#b03a28">2</tspan><tspan x="299.0" fill="#2a2aff">,</tspan><tspan x="315.0" fill="#4a4a4a">dia</tspan><tspan x="347.0" fill="#2a2aff">+</tspan></text>
<path d="M384.5,367.9 H392.3 V373.3 H385.2 M388,370.3 L385,373.3 L388,376.3" fill="none" stroke="#444" stroke-width="0.9"/>
<text class="mono" y="390.39" font-size="13.33" xml:space="preserve"><tspan x="67.0" fill="#4a4a4a">wall</tspan><tspan x="99.0" fill="#4a4a4a">*</tspan><tspan x="107.0" fill="#b03a28">2</tspan><tspan x="115.0" fill="#2a2aff">,</tspan><tspan x="131.0" fill="#4a4a4a">dia</tspan><tspan x="163.0" fill="#2a2aff">+</tspan><tspan x="179.0" fill="#4a4a4a">wall</tspan><tspan x="211.0" fill="#4646f0">]</tspan><tspan x="219.0" fill="#4646f0">)</tspan><tspan x="227.0" fill="#2a2aff">;</tspan></text>
<text class="mono" x="23" y="405.73" font-size="13.33" fill="#939393" text-anchor="end">18</text>
<text class="mono" y="405.73" font-size="13.33" xml:space="preserve"><tspan x="67.0" fill="#4646f0">}</tspan></text>
<text class="mono" x="23" y="421.06" font-size="13.33" fill="#939393" text-anchor="end">19</text>
<text class="mono" x="23" y="436.39" font-size="13.33" fill="#939393" text-anchor="end">20</text>
<text class="mono" y="436.39" font-size="13.33" xml:space="preserve"><tspan x="67.0" fill="#33a0a0">// inner corpus</tspan></text>
<text class="mono" x="23" y="451.73" font-size="13.33" fill="#939393" text-anchor="end">21</text>
<text class="mono" y="451.73" font-size="13.33" xml:space="preserve"><tspan x="67.0" fill="#4040a8">translate</tspan><tspan x="139.0" fill="#4646f0">(</tspan><tspan x="147.0" fill="#4646f0">[</tspan><tspan x="155.0" fill="#4a4a4a">wall</tspan><tspan x="187.0" fill="#2a2aff">,</tspan><tspan x="203.0" fill="#4a4a4a">wall</tspan><tspan x="235.0" fill="#2a2aff">,</tspan><tspan x="251.0" fill="#4a4a4a">wall</tspan><tspan x="283.0" fill="#4646f0">]</tspan><tspan x="291.0" fill="#4646f0">)</tspan></text>
<text class="mono" x="23" y="467.06" font-size="13.33" fill="#939393" text-anchor="end">22</text>
<text class="mono" y="467.06" font-size="13.33" xml:space="preserve"><tspan x="99.0" fill="#4040a8">cube</tspan><tspan x="131.0" fill="#4646f0">(</tspan><tspan x="139.0" fill="#4646f0">[</tspan><tspan x="147.0" fill="#4a4a4a">length</tspan><tspan x="195.0" fill="#2a2aff">,</tspan><tspan x="211.0" fill="#4a4a4a">dia</tspan><tspan x="235.0" fill="#2a2aff">,</tspan><tspan x="251.0" fill="#4a4a4a">dia</tspan><tspan x="275.0" fill="#4a4a4a">*</tspan><tspan x="283.0" fill="#4a4a4a">number</tspan><tspan x="331.0" fill="#4646f0">]</tspan><tspan x="339.0" fill="#4646f0">)</tspan><tspan x="347.0" fill="#2a2aff">;</tspan></text>
<text class="mono" x="23" y="482.39" font-size="13.33" fill="#939393" text-anchor="end">23</text>
<text class="mono" x="23" y="497.73" font-size="13.33" fill="#939393" text-anchor="end">24</text>
<text class="mono" y="497.73" font-size="13.33" xml:space="preserve"><tspan x="67.0" fill="#33a0a0">// inner tray</tspan></text>
<text class="mono" x="23" y="513.06" font-size="13.33" fill="#939393" text-anchor="end">25</text>
<text class="mono" y="513.06" font-size="13.33" xml:space="preserve"><tspan x="67.0" fill="#4040a8">translate</tspan><tspan x="139.0" fill="#4646f0">(</tspan><tspan x="147.0" fill="#4646f0">[</tspan><tspan x="155.0" fill="#4a4a4a">wall</tspan><tspan x="187.0" fill="#2a2aff">,</tspan><tspan x="203.0" fill="#4a4a4a">dia</tspan><tspan x="227.0" fill="#2a2aff">+</tspan><tspan x="235.0" fill="#4a4a4a">wall</tspan><tspan x="267.0" fill="#2a2aff">,</tspan><tspan x="283.0" fill="#4a4a4a">wall</tspan><tspan x="315.0" fill="#4646f0">]</tspan><tspan x="323.0" fill="#4646f0">)</tspan></text>
<text class="mono" x="23" y="528.39" font-size="13.33" fill="#939393" text-anchor="end">26</text>
<text class="mono" y="528.39" font-size="13.33" xml:space="preserve"><tspan x="99.0" fill="#4040a8">cube</tspan><tspan x="131.0" fill="#4646f0">(</tspan><tspan x="139.0" fill="#4646f0">[</tspan><tspan x="147.0" fill="#4a4a4a">length</tspan><tspan x="195.0" fill="#2a2aff">,</tspan><tspan x="211.0" fill="#4a4a4a">dia</tspan><tspan x="235.0" fill="#2a2aff">+</tspan><tspan x="243.0" fill="#4a4a4a">wall</tspan><tspan x="275.0" fill="#2a2aff">,</tspan><tspan x="291.0" fill="#4a4a4a">dia</tspan><tspan x="315.0" fill="#2a2aff">+</tspan><tspan x="323.0" fill="#4a4a4a">wall</tspan><tspan x="355.0" fill="#4646f0">]</tspan><tspan x="363.0" fill="#4646f0">)</tspan><tspan x="371.0" fill="#2a2aff">;</tspan></text>
<text class="mono" x="23" y="543.72" font-size="13.33" fill="#939393" text-anchor="end">27</text>
<text class="mono" x="23" y="559.06" font-size="13.33" fill="#939393" text-anchor="end">28</text>
<text class="mono" y="559.06" font-size="13.33" xml:space="preserve"><tspan x="67.0" fill="#33a0a0">// view/finger hole</tspan></text>
<text class="mono" x="23" y="574.39" font-size="13.33" fill="#939393" text-anchor="end">29</text>
<text class="mono" y="574.39" font-size="13.33" xml:space="preserve"><tspan x="67.0" fill="#4040a8">translate</tspan><tspan x="139.0" fill="#4646f0">(</tspan><tspan x="147.0" fill="#4646f0">[</tspan><tspan x="155.0" fill="#4646f0">(</tspan><tspan x="163.0" fill="#4646f0">(</tspan><tspan x="171.0" fill="#4a4a4a">length</tspan><tspan x="235.0" fill="#2a2aff">+</tspan><tspan x="251.0" fill="#4a4a4a">wall</tspan><tspan x="283.0" fill="#4a4a4a">*</tspan><tspan x="291.0" fill="#b03a28">2</tspan><tspan x="299.0" fill="#4646f0">)</tspan><tspan x="307.0" fill="#2a2aff">-</tspan><tspan x="315.0" fill="#4a4a4a">finger</tspan></text>
<path d="M384.5,567.2 H392.3 V572.6 H385.2 M388,569.6 L385,572.6 L388,575.6" fill="none" stroke="#444" stroke-width="0.9"/>
<text class="mono" y="589.72" font-size="13.33" xml:space="preserve"><tspan x="67.0" fill="#4646f0">)</tspan><tspan x="75.0" fill="#2a2aff">/</tspan><tspan x="83.0" fill="#b03a28">2</tspan><tspan x="99.0" fill="#2a2aff">,</tspan><tspan x="107.0" fill="#4a4a4a">wall</tspan><tspan x="139.0" fill="#2a2aff">,</tspan><tspan x="147.0" fill="#b03a28">0</tspan><tspan x="155.0" fill="#4646f0">]</tspan><tspan x="163.0" fill="#4646f0">)</tspan></text>
<text class="mono" x="23" y="605.06" font-size="13.33" fill="#939393" text-anchor="end">30</text>
<text class="mono" y="605.06" font-size="13.33" xml:space="preserve"><tspan x="99.0" fill="#4040a8">cube</tspan><tspan x="131.0" fill="#4646f0">(</tspan><tspan x="139.0" fill="#4646f0">[</tspan><tspan x="147.0" fill="#4a4a4a">finger</tspan><tspan x="195.0" fill="#2a2aff">,</tspan><tspan x="211.0" fill="#4a4a4a">dia</tspan><tspan x="235.0" fill="#4a4a4a">*</tspan><tspan x="243.0" fill="#b03a28">2</tspan><tspan x="251.0" fill="#2a2aff">+</tspan><tspan x="259.0" fill="#4a4a4a">wall</tspan><tspan x="291.0" fill="#4a4a4a">*</tspan><tspan x="299.0" fill="#b03a28">2</tspan><tspan x="307.0" fill="#2a2aff">,</tspan><tspan x="323.0" fill="#4a4a4a">dia</tspan><tspan x="347.0" fill="#4a4a4a">*</tspan></text>
<path d="M384.5,597.9 H392.3 V603.3 H385.2 M388,600.3 L385,603.3 L388,606.3" fill="none" stroke="#444" stroke-width="0.9"/>
<text class="mono" y="620.39" font-size="13.33" xml:space="preserve"><tspan x="67.0" fill="#4a4a4a">number</tspan><tspan x="123.0" fill="#2a2aff">+</tspan><tspan x="139.0" fill="#4a4a4a">wall</tspan><tspan x="171.0" fill="#4646f0">]</tspan><tspan x="179.0" fill="#4646f0">)</tspan><tspan x="187.0" fill="#2a2aff">;</tspan></text>
<text class="mono" x="23" y="635.72" font-size="13.33" fill="#939393" text-anchor="end">31</text>
<text class="mono" x="23" y="651.05" font-size="13.33" fill="#939393" text-anchor="end">32</text>
<text class="mono" y="651.05" font-size="13.33" xml:space="preserve"><tspan x="67.0" fill="#33a0a0">// finger hole in the back</tspan></text>
<text class="mono" x="23" y="666.39" font-size="13.33" fill="#939393" text-anchor="end">33</text>
<text class="mono" y="666.39" font-size="13.33" xml:space="preserve"><tspan x="67.0" fill="#4040a8">translate</tspan><tspan x="139.0" fill="#4646f0">(</tspan><tspan x="147.0" fill="#4646f0">[</tspan><tspan x="155.0" fill="#4646f0">(</tspan><tspan x="163.0" fill="#4646f0">(</tspan><tspan x="171.0" fill="#4a4a4a">length</tspan><tspan x="235.0" fill="#2a2aff">+</tspan><tspan x="251.0" fill="#4a4a4a">wall</tspan><tspan x="283.0" fill="#4a4a4a">*</tspan><tspan x="291.0" fill="#b03a28">2</tspan><tspan x="299.0" fill="#4646f0">)</tspan><tspan x="307.0" fill="#2a2aff">-</tspan><tspan x="315.0" fill="#4a4a4a">finger</tspan></text>
<path d="M384.5,659.2 H392.3 V664.6 H385.2 M388,661.6 L385,664.6 L388,667.6" fill="none" stroke="#444" stroke-width="0.9"/>
<text class="mono" y="681.72" font-size="13.33" xml:space="preserve"><tspan x="67.0" fill="#4646f0">)</tspan><tspan x="75.0" fill="#2a2aff">/</tspan><tspan x="83.0" fill="#b03a28">2</tspan><tspan x="99.0" fill="#2a2aff">,</tspan><tspan x="107.0" fill="#b03a28">0</tspan><tspan x="123.0" fill="#2a2aff">,</tspan><tspan x="131.0" fill="#b03a28">0</tspan><tspan x="139.0" fill="#4646f0">]</tspan><tspan x="147.0" fill="#4646f0">)</tspan></text>
<text class="mono" x="23" y="697.05" font-size="13.33" fill="#939393" text-anchor="end">34</text>
<text class="mono" y="697.05" font-size="13.33" xml:space="preserve"><tspan x="99.0" fill="#4040a8">cube</tspan><tspan x="131.0" fill="#4646f0">(</tspan><tspan x="139.0" fill="#4646f0">[</tspan><tspan x="147.0" fill="#4a4a4a">finger</tspan><tspan x="195.0" fill="#2a2aff">,</tspan><tspan x="211.0" fill="#4a4a4a">wall</tspan><tspan x="243.0" fill="#4a4a4a">*</tspan><tspan x="251.0" fill="#b03a28">2</tspan><tspan x="259.0" fill="#2a2aff">,</tspan><tspan x="275.0" fill="#4a4a4a">dia</tspan><tspan x="307.0" fill="#2a2aff">+</tspan><tspan x="323.0" fill="#4a4a4a">wall</tspan><tspan x="355.0" fill="#4646f0">]</tspan><tspan x="363.0" fill="#4646f0">)</tspan><tspan x="371.0" fill="#2a2aff">;</tspan></text>
<text class="mono" x="23" y="712.39" font-size="13.33" fill="#939393" text-anchor="end">35</text>
<line x1="29.7" y1="251.1" x2="29.7" y2="704" stroke="#333" stroke-width="0.9"/>
<rect x="26.3" y="243.1" width="7.5" height="8" fill="#fff" stroke="#555" stroke-width="0.9"/><line x1="27.8" y1="247.1" x2="32.3" y2="247.1" stroke="#333" stroke-width="0.9"/>
<rect x="26.3" y="258.4" width="7.5" height="8" fill="#fff" stroke="#555" stroke-width="0.9"/><line x1="27.8" y1="262.4" x2="32.3" y2="262.4" stroke="#333" stroke-width="0.9"/>
<line x1="29.7" y1="417.5" x2="33.5" y2="417.5" stroke="#333" stroke-width="0.9"/>
</g>
<g><ellipse cx="8.2" cy="9.3" rx="6.3" ry="5.2" transform="rotate(-25 8.2 9.3)" fill="#e6cc2a"/><ellipse cx="4.2" cy="11.5" rx="2.6" ry="2.6" fill="#b8906a"/><path d="M6,5.2 Q9,3.8 11,5.6 L9.5,6.8 Q7.5,6.2 6.3,6.6Z" fill="#3a4a1a"/><path d="M11.6,6.5 Q13.6,8 13,10.5 L11.5,11.2 Q12,9 10.8,7.4Z" fill="#5a8a2a"/><path d="M6.4,12.6 Q8.5,14.2 10.6,13.4 L10,12.2 Q8.4,12.8 7.2,11.8Z" fill="#4a5a1a"/><circle cx="6" cy="12.3" r="0.9" fill="#6ac23a"/><circle cx="10.4" cy="11.2" r="0.9" fill="#7ad04a"/></g>
<line x1="1177" y1="9.2" x2="1185.3" y2="9.2" stroke="#333" stroke-width="1"/>
<rect x="1216" y="6.6" width="6.3" height="6.6" rx="1.2" fill="none" stroke="#333" stroke-width="0.9"/>
<path d="M1217.8,5 H1222.6 Q1224.1,5 1224.1,6.5 V11.2" fill="none" stroke="#333" stroke-width="0.9"/>
<path d="M1255,5 L1263.5,13.5 M1263.5,5 L1255,13.5" stroke="#333" stroke-width="1" fill="none"/>
<line x1="5.5" y1="33.6" x2="10.5" y2="33.6" stroke="#444" stroke-width="0.8"/>
<line x1="31.5" y1="33.6" x2="37" y2="33.6" stroke="#444" stroke-width="0.8"/>
<line x1="59.5" y1="33.6" x2="66.5" y2="33.6" stroke="#444" stroke-width="0.8"/>
<line x1="100.8" y1="33.6" x2="107.5" y2="33.6" stroke="#444" stroke-width="0.8"/>
<line x1="132.9" y1="33.6" x2="143.3" y2="33.6" stroke="#444" stroke-width="0.8"/>
<line x1="180" y1="33.6" x2="186.5" y2="33.6" stroke="#444" stroke-width="0.8"/>
<rect x="84.6" y="43.3" width="9.6" height="9.6" rx="1.2" fill="#e2583e"/>
<path d="M87,45.7 L91.8,50.5 M91.8,45.7 L87,50.5" stroke="#fff" stroke-width="1.3"/>
<path d="M394.0,63.2 L400.4,69.2 M400.4,63.2 L394.0,69.2" stroke="#222" stroke-width="1.4"/>
<path d="M633.0999999999999,531.3 L639.5,537.3 M639.5,531.3 L633.0999999999999,537.3" stroke="#222" stroke-width="1.4"/>
<path d="M1024.3,531.3 L1030.7,537.3 M1030.7,531.3 L1024.3,537.3" stroke="#222" stroke-width="1.4"/>
<path d="M1268.3,63 L1274.7,69 M1274.7,63 L1268.3,69" stroke="#222" stroke-width="1.4"/>
<path d="M11.3,83.9 H17 Q18,83.9 18,84.9 V94.9 Q18,95.9 17,95.9 H9.4 Q8.6,95.9 8.6,94.9 V86.6 Z" fill="none" stroke="#444" stroke-width="1.2" stroke-linecap="round" stroke-linejoin="round"/>
<path d="M8.6,86.6 L11.3,83.9 L11.3,86.6Z" fill="#222"/>
<circle cx="13.8" cy="90.8" r="1.9" fill="#222"/>
<path d="M30.8,89.6 H42.6 V94.2 H30.8Z" fill="#222"/>
<path d="M30.8,84.6 H34.4 L35.6,85.9 H36.8 V87.6 H30.8Z" fill="#222"/>
<path d="M35.5,87.4 H38.5 L40,86.5 H42.6" fill="none" stroke="#222" stroke-width="1.5" stroke-linecap="round" stroke-linejoin="round"/>
<path d="M41.8,84.6 L45.6,86.9 L41.8,89.2Z" fill="#222"/>
<path d="M56.6,83.2 H68.9 V95.8 H56.6Z" fill="#222"/>
<rect x="58.5" y="83.2" width="8.6" height="3.3" fill="#f0f0f0"/><rect x="60" y="83.6" width="1.2" height="2.4" fill="#222"/>
<rect x="58.2" y="92.9" width="9.2" height="1.3" fill="#f0f0f0"/>
<line x1="77.4" y1="79" x2="77.4" y2="100" stroke="#d6d6d6" stroke-width="1"/>
<line x1="181" y1="79" x2="181" y2="100" stroke="#d6d6d6" stroke-width="1"/>
<line x1="235.6" y1="79" x2="235.6" y2="100" stroke="#d6d6d6" stroke-width="1"/>
<path d="M98,93.8 C98.2,88 94.8,85.6 92,85.6 C89.6,85.6 88,87 87,88.6" fill="none" stroke="#111" stroke-width="1.9" stroke-linecap="round" stroke-linejoin="round"/>
<path d="M84.7,86.6 L85.2,93.6 L91.2,92.6Z" fill="#111"/>
<path d="M110.8,93.8 C110.6,88 114,85.6 116.8,85.6 C119.2,85.6 120.8,87 121.8,88.6" fill="none" stroke="#111" stroke-width="1.9" stroke-linecap="round" stroke-linejoin="round"/>
<path d="M124.1,86.6 L123.6,93.6 L117.6,92.6Z" fill="#111"/>
<path d="M134,85.2 H139.2 M141.6,85.2 H146 M134,87.5 H141 M136.5,90 H141 M134,93.6 H139.2 M141.6,93.6 H146" fill="none" stroke="#444" stroke-width="1.1" stroke-linecap="round" stroke-linejoin="round"/>
<path d="M148.7,89.4 H142.3 M145,87 L142.3,89.4 L145,91.8" fill="none" stroke="#111" stroke-width="1.2" stroke-linecap="round" stroke-linejoin="round"/>
<path d="M161.5,85.2 H163.6 M165.5,85.2 H173.4 M165.5,87.5 H173.4 M165.5,90.5 H171 M161.5,93.6 H163.6 M165.5,93.6 H173.4" fill="none" stroke="#444" stroke-width="1.1" stroke-linecap="round" stroke-linejoin="round"/>
<path d="M158.6,89.4 H165 M162.3,87 L165,89.4 L162.3,91.8" fill="none" stroke="#111" stroke-width="1.2" stroke-linecap="round" stroke-linejoin="round"/>
<circle cx="195.1" cy="87.2" r="7.5" fill="none" stroke="#555" stroke-width="1.2" stroke-dasharray="1.5,1.1"/><path d="M190.5,84.8 L195.1,87.2 L199.7,84.8 M195.1,87.2 V90.2" fill="none" stroke="#666" stroke-width="1" stroke-linecap="round" stroke-linejoin="round" stroke-dasharray="1.3,1"/><path d="M190.5,92.10000000000001 L194.2,95.5 L190.5,98.9 M195.5,92.10000000000001 L199.2,95.5 L195.5,98.9" fill="none" stroke="#111" stroke-width="2.3" stroke-linejoin="miter" stroke-linecap="butt"/>
<path d="M220.00,80.90 L226.58,84.70 L226.58,92.30 L220.00,96.10 L213.42,92.30 L213.42,84.70Z M213.42,84.70 L220,88.5 L226.58,84.70" fill="none" stroke="#333" stroke-width="1.2" stroke-linecap="round" stroke-linejoin="round"/><path d="M220,88.5 V95" fill="none" stroke="#333" stroke-width="1.3" stroke-linecap="round" stroke-linejoin="round"/><path d="M217.8,92.8 L220,95.2 L222.2,92.8" fill="none" stroke="#222" stroke-width="1.2" stroke-linecap="round" stroke-linejoin="round"/><path d="M217.5,98.3 H222.5" fill="none" stroke="#111" stroke-width="1.5" stroke-linecap="round" stroke-linejoin="round"/>
<path d="M244.5,89.5 V84 L248,80.3 H253.8 Q254.8,80.3 254.8,81.3 V89.5" fill="none" stroke="#444" stroke-width="1.2" stroke-linecap="round" stroke-linejoin="round"/>
<path d="M244.5,84 L248,80.3 V84Z" fill="#222"/>
<text x="241.6" y="97.4" font-size="8.4" font-weight="bold" fill="#000" textLength="16.8" lengthAdjust="spacingAndGlyphs" stroke="#000" stroke-width="0.35">STL</text>
<path d="M271.8,80 H276.2 L275,82.4 V85.5 L274,87 L273,85.5 V82.4Z" fill="#222"/>
<path d="M274,87 V89" fill="none" stroke="#333" stroke-width="0.8" stroke-linecap="round" stroke-linejoin="round"/>
<path d="M267.4,89 L273.2,87.9 L279.6,89.6 V96.6 L273.6,98.7 L267.6,96.2Z M267.4,89 L273.6,91.2 L279.6,89.6 M273.6,91.2 V98.7" fill="none" stroke="#444" stroke-width="1.1" stroke-linecap="round" stroke-linejoin="round"/>
<circle cx="424.1" cy="507.8" r="7.5" fill="none" stroke="#555" stroke-width="1.2" stroke-dasharray="1.5,1.1"/><path d="M419.5,505.40000000000003 L424.1,507.8 L428.70000000000005,505.40000000000003 M424.1,507.8 V510.8" fill="none" stroke="#666" stroke-width="1" stroke-linecap="round" stroke-linejoin="round" stroke-dasharray="1.3,1"/><path d="M419.5,512.7 L423.20000000000005,516.1 L419.5,519.5 M424.5,512.7 L428.20000000000005,516.1 L424.5,519.5" fill="none" stroke="#111" stroke-width="2.3" stroke-linejoin="miter" stroke-linecap="butt"/>
<path d="M449.00,500.40 L455.58,504.20 L455.58,511.80 L449.00,515.60 L442.42,511.80 L442.42,504.20Z M442.42,504.20 L449,508.0 L455.58,504.20" fill="none" stroke="#333" stroke-width="1.2" stroke-linecap="round" stroke-linejoin="round"/><path d="M449,508.0 V514.5" fill="none" stroke="#333" stroke-width="1.3" stroke-linecap="round" stroke-linejoin="round"/><path d="M446.8,512.3 L449,514.7 L451.2,512.3" fill="none" stroke="#222" stroke-width="1.2" stroke-linecap="round" stroke-linejoin="round"/><path d="M446.5,517.8 H451.5" fill="none" stroke="#111" stroke-width="1.5" stroke-linecap="round" stroke-linejoin="round"/>
<line x1="464" y1="499" x2="464" y2="519" stroke="#d6d6d6" stroke-width="1"/>
<line x1="567.5" y1="499" x2="567.5" y2="519" stroke="#d6d6d6" stroke-width="1"/>
<line x1="720.6" y1="499" x2="720.6" y2="519" stroke="#d6d6d6" stroke-width="1"/>
<line x1="774.4" y1="499" x2="774.4" y2="519" stroke="#d6d6d6" stroke-width="1"/>
<path d="M471,504.5 V501.8 H473.8 M480.4,501.8 H483.2 V504.5 M471,510.4 V513.2 H473.8" fill="none" stroke="#111" stroke-width="1.4" stroke-linecap="round" stroke-linejoin="round"/>
<circle cx="477" cy="507.6" r="3.6" fill="none" stroke="#111" stroke-width="1.6"/>
<path d="M479.6,510.3 L482.8,514.2" fill="none" stroke="#111" stroke-width="2" stroke-linecap="round" stroke-linejoin="round"/>
<circle cx="501.5" cy="507.4" r="3.9" fill="none" stroke="#111" stroke-width="1.6"/>
<path d="M504.4,510.4 L507.9,514.6" fill="none" stroke="#111" stroke-width="2.1" stroke-linecap="round" stroke-linejoin="round"/>
<path d="M499.5,507.4 H503.5 M501.5,505.4 V509.4" fill="none" stroke="#333" stroke-width="1" stroke-linecap="round" stroke-linejoin="round"/>
<circle cx="526.2" cy="507.4" r="3.9" fill="none" stroke="#111" stroke-width="1.6"/>
<path d="M529.1,510.4 L532.6,514.6" fill="none" stroke="#111" stroke-width="2.1" stroke-linecap="round" stroke-linejoin="round"/>
<path d="M524.2,507.4 H528.2" fill="none" stroke="#333" stroke-width="1" stroke-linecap="round" stroke-linejoin="round"/>
<path d="M547.2,504.5 A6.3,6.3 0 1 1 546.4,508.4" fill="none" stroke="#111" stroke-width="1.7" stroke-linecap="round" stroke-linejoin="round"/>
<path d="M545.2,501.2 L545.6,507.6 L550.6,505.3Z" fill="#111"/>
<path d="M574.2,508.3 L577.1,502.4 L583.5,502.6 L585.1,508.3 L583.5,513.8 L576.6,513.9ZM574.2,508.3 L581.4,508.3M583.5,502.6 L581.4,508.3 L583.5,513.8" fill="none" stroke="#333" stroke-width="1.15" stroke-linecap="round" stroke-linejoin="round"/>
<path d="M585.3,505.8 L589,508.3 L585.3,510.8Z" fill="#111"/>
<path d="M606.4,504.5 L611.9,506.7 L611.9,512.7 L606.4,515.4 L600.9,512.7 L600.9,506.7ZM600.9,506.7 L606.4,508.7 L611.9,506.7M606.4,508.7 L606.4,515.4" fill="none" stroke="#333" stroke-width="1.15" stroke-linecap="round" stroke-linejoin="round"/>
<path d="M604.5,505.3 L606.4,500.9 L608.3,505.3Z" fill="#111"/>
<path d="M629.3,501.6 L634.7,504.5 L634.7,510.8 L629.3,513.4 L623.9,510.8 L623.9,504.5ZM629.3,501.6 L629.3,508.3M623.9,510.8 L629.3,508.3 L634.7,510.8" fill="none" stroke="#333" stroke-width="1.15" stroke-linecap="round" stroke-linejoin="round"/>
<path d="M627.4,512.6 L629.3,516.6 L631.2,512.6Z" fill="#111"/>
<path d="M653.3,502.7 L660.2,502.4 L663.2,508.3 L660.2,514 L653.8,513.6 L652.1,508.3ZM653.3,502.7 L656.4,508.3 L653.8,513.6M656.4,508.3 L663.2,508.3" fill="none" stroke="#333" stroke-width="1.15" stroke-linecap="round" stroke-linejoin="round"/>
<path d="M651.9,506.2 L648.4,508.3 L651.9,510.4Z" fill="#111"/>
<path d="M674.8,506.6 L680.4,509.5 L680.4,515.4 L674.8,512.5Z" fill="#1a1a1a"/>
<path d="M680.4,503.6 L686,506.6 L686,512.5 L680.4,515.4 L674.8,512.5 L674.8,506.6ZM674.8,506.6 L680.4,509.5 L686,506.6M680.4,509.5 L680.4,515.4" fill="none" stroke="#333" stroke-width="1.15" stroke-linecap="round" stroke-linejoin="round"/>
<path d="M705,503.6 L710.6,506.6 L710.6,511.8 L705,509.5Z" fill="#1a1a1a"/>
<path d="M706.3,510.6 L709.8,512.2 L706.3,513.6Z" fill="#f0f0f0"/>
<path d="M705,503.6 L710.6,506.6 L710.6,512.5 L705,515.4 L699.4,512.5 L699.4,506.6ZM699.4,506.6 L705,509.5 L710.6,506.6M705,509.5 L705,515.4" fill="none" stroke="#333" stroke-width="1.15" stroke-linecap="round" stroke-linejoin="round"/>
<rect x="722.5" y="498.2" width="24.299999999999955" height="22" rx="1.5" fill="#cce4f7" stroke="#a6d2f3" stroke-width="0.8"/>
<rect x="776.5" y="498.2" width="24.0" height="22" rx="1.5" fill="#cce4f7" stroke="#a6d2f3" stroke-width="0.8"/>
<rect x="801.2" y="498.2" width="24.59999999999991" height="22" rx="1.5" fill="#cce4f7" stroke="#a6d2f3" stroke-width="0.8"/>
<path d="M728.4,507.8 H736.6 V516.8 H728.4Z M728.4,507.8 L731.5,505.3 L743,502.6 L736.6,507.8 M736.6,516.8 L743,502.6" fill="none" stroke="#222" stroke-width="1.1" stroke-linecap="round" stroke-linejoin="round"/>
<path d="M753.4,507 H761.8 V515.6 H753.4Z M756.6,503.6 H765 V512.2 H756.6Z M753.4,507 L756.6,503.6 M761.8,507 L765,503.6 M761.8,515.6 L765,512.2 M753.4,515.6 L756.6,512.2" fill="none" stroke="#222" stroke-width="1.1" stroke-linecap="round" stroke-linejoin="round"/>
<path d="M788.8,502.2 V509.9 H797.6 M788.8,509.9 L782.8,515.8" fill="none" stroke="#222" stroke-width="1" stroke-linecap="round" stroke-linejoin="round"/>
<circle cx="788.8" cy="509.9" r="1" fill="#111"/>
<path d="M814.2,501.5 V509.5 H822.6 M814.2,509.5 L808.6,515" fill="none" stroke="#333" stroke-width="1" stroke-linecap="round" stroke-linejoin="round"/>
<path d="M814.2,503 H815.6 M814.2,505 H815.6 M814.2,507 H815.6 M816.5,509.5 V508.3 M818.5,509.5 V508.3 M820.5,509.5 V508.3 M811.8,512.2 L812.8,513.2 M810.3,513.7 L811.3,514.7" fill="none" stroke="#444" stroke-width="0.8" stroke-linecap="round" stroke-linejoin="round"/>
<text x="818.8" y="518" font-size="7.6" fill="#333" text-anchor="middle">10</text>
<path d="M831.6,504.6 H844 V514.6 H831.6Z" fill="none" stroke="#555" stroke-width="1" stroke-linecap="round" stroke-linejoin="round" stroke-dasharray="2,1.2"/>
<circle cx="831.6" cy="504.6" r="1.1" fill="#111"/>
<circle cx="844" cy="504.6" r="1.1" fill="#111"/>
<circle cx="831.6" cy="514.6" r="1.1" fill="#111"/>
<circle cx="844" cy="514.6" r="1.1" fill="#111"/>
<path d="M765.5,556.2 L768.5,559.2 L771.5,556.2" fill="none" stroke="#555" stroke-width="0.9" stroke-linecap="round" stroke-linejoin="round"/>
<path d="M1201.5,86.1 L1204.5,89.1 L1207.5,86.1" fill="none" stroke="#555" stroke-width="0.9" stroke-linecap="round" stroke-linejoin="round"/>
<path d="M1134.3,108.5 L1137.3,111.5 L1140.3,108.5" fill="none" stroke="#555" stroke-width="0.9" stroke-linecap="round" stroke-linejoin="round"/>
<path d="M1043.4,87.4 L1045.4,89.6 L1048.6,85.4" fill="none" stroke="#fff" stroke-width="1.1" stroke-linecap="round" stroke-linejoin="round"/>
</svg></body></html>
